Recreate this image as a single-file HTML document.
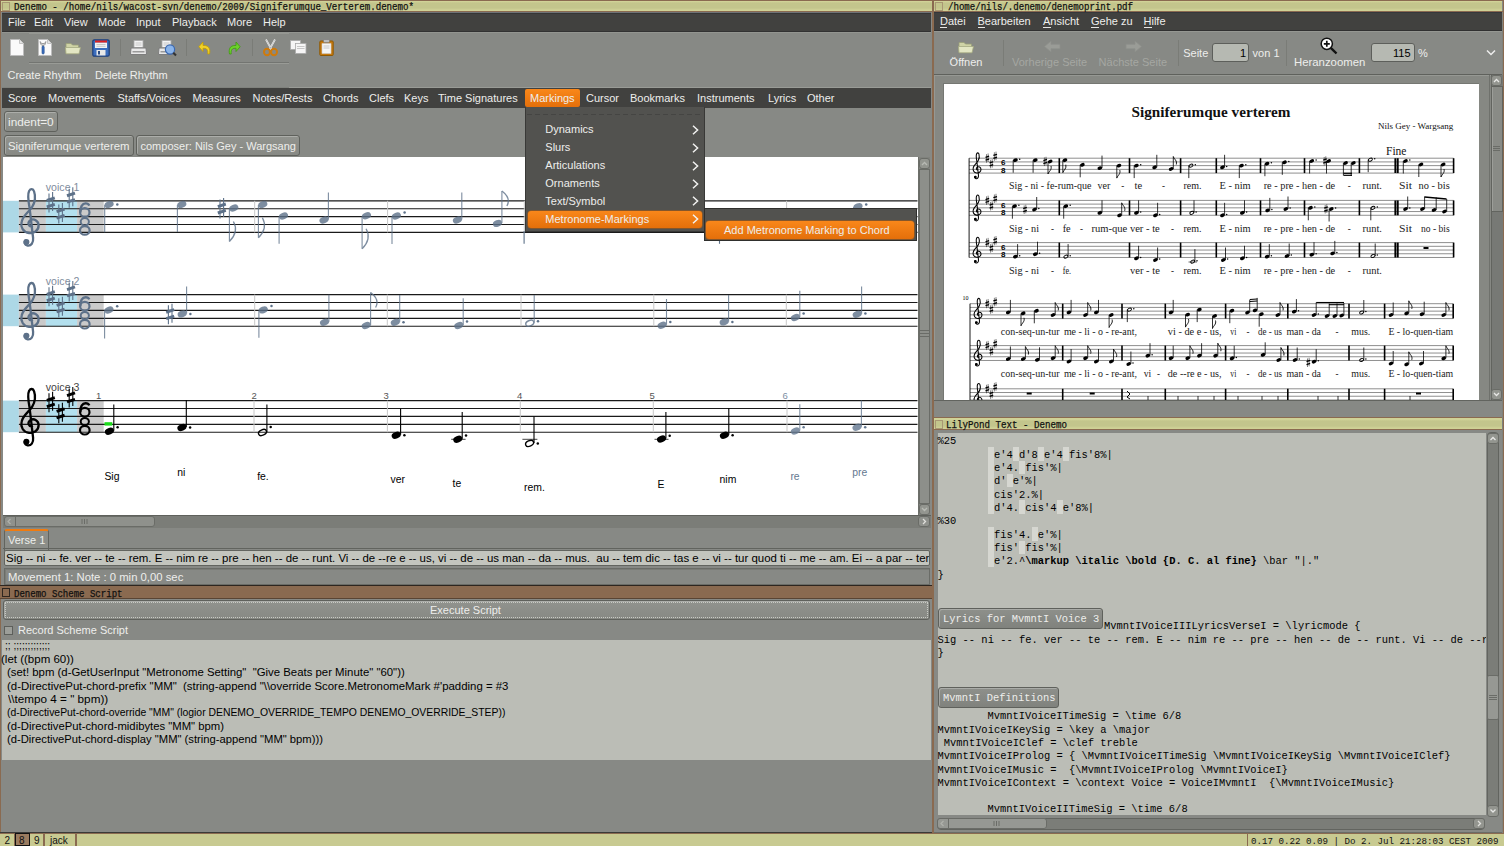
<!DOCTYPE html>
<html><head><meta charset="utf-8"><style>
html,body{margin:0;padding:0;}
body{width:1504px;height:846px;position:relative;overflow:hidden;background:#878985;font-family:"Liberation Sans",sans-serif;}
.a{position:absolute;}
svg.a{overflow:visible;}
.t{position:absolute;white-space:pre;font-family:"Liberation Sans",sans-serif;font-size:11px;line-height:13px;color:#eeeeec;}
.tb{position:absolute;background:#c6c791;}
.menu{position:absolute;background:#3c3c3c;}
.btn{position:absolute;box-sizing:border-box;border:1px solid #5f615c;border-radius:3px;background:linear-gradient(#91938e,#878984);box-shadow:inset 1px 1px 0 rgba(255,255,255,0.25);}
</style></head><body>
<div class="a" style="left:0px;top:0px;width:933px;height:846px;background:#878985;"></div>
<div class="a" style="left:0px;top:0px;width:933px;height:12px;background:linear-gradient(#d0d297 0 1.5px,#c3c58c 3px 8px,#cfd196 10px);"></div>
<div class="a" style="left:0px;top:0px;width:933px;height:1px;background:#8a6a50;"></div>
<div class="a" style="left:0px;top:11px;width:933px;height:1px;background:#8a6a50;"></div>
<div class="a" style="left:2px;top:2px;width:6px;height:7px;border:1px solid #a89873;"></div>
<div class="t" style="left:14px;top:0.53px;font-size:10.4px;font-family:'Liberation Mono',monospace;color:#111;-webkit-text-stroke:0.25px #111;transform:scaleX(0.8788);transform-origin:0 0;">Denemo - /home/nils/wacost-svn/denemo/2009/Signiferumque_Verterem.denemo*</div>
<div class="a" style="left:0px;top:0px;width:1px;height:846px;background:#8a6a50;"></div>
<div class="a" style="left:2px;top:12px;width:929px;height:1px;background:#6f7378;"></div>
<div class="a" style="left:2px;top:13px;width:929px;height:1px;background:#363636;"></div>
<div class="a" style="left:2px;top:14px;width:929px;height:17px;background:#41413f;"></div>
<div class="a" style="left:2px;top:31px;width:929px;height:1px;background:#323232;"></div>
<div class="a" style="left:2px;top:32px;width:929px;height:1px;background:#939590;"></div>
<div class="t" style="left:8px;top:15.69px;font-size:11px;font-family:'Liberation Sans',sans-serif;">File</div>
<div class="t" style="left:34px;top:15.69px;font-size:11px;font-family:'Liberation Sans',sans-serif;">Edit</div>
<div class="t" style="left:64px;top:15.69px;font-size:11px;font-family:'Liberation Sans',sans-serif;">View</div>
<div class="t" style="left:98px;top:15.69px;font-size:11px;font-family:'Liberation Sans',sans-serif;">Mode</div>
<div class="t" style="left:136px;top:15.69px;font-size:11px;font-family:'Liberation Sans',sans-serif;">Input</div>
<div class="t" style="left:172px;top:15.69px;font-size:11px;font-family:'Liberation Sans',sans-serif;">Playback</div>
<div class="t" style="left:227px;top:15.69px;font-size:11px;font-family:'Liberation Sans',sans-serif;">More</div>
<div class="t" style="left:263px;top:15.69px;font-size:11px;font-family:'Liberation Sans',sans-serif;">Help</div>
<div class="a" style="left:29px;top:33px;width:260px;height:1px;background:#959792;"></div>
<div class="a" style="left:29px;top:62px;width:260px;height:1px;background:#737571;"></div>
<div class="a" style="left:29px;top:63px;width:260px;height:1px;background:#999b96;"></div>
<div class="t" style="left:7.5px;top:68.69px;font-size:11px;font-family:'Liberation Sans',sans-serif;">Create Rhythm</div>
<div class="t" style="left:95px;top:68.69px;font-size:11px;font-family:'Liberation Sans',sans-serif;">Delete Rhythm</div>
<div class="a" style="left:2px;top:87px;width:287px;height:1px;background:#7f817c;"></div>
<div class="a" style="left:289px;top:87px;width:642px;height:1px;background:#999b96;"></div>
<div class="a" style="left:2px;top:88px;width:929px;height:20px;background:#41413f;"></div>
<div class="t" style="left:8px;top:92.19px;font-size:11px;font-family:'Liberation Sans',sans-serif;">Score</div>
<div class="t" style="left:48px;top:92.19px;font-size:11px;font-family:'Liberation Sans',sans-serif;">Movements</div>
<div class="t" style="left:117.5px;top:92.19px;font-size:11px;font-family:'Liberation Sans',sans-serif;">Staffs/Voices</div>
<div class="t" style="left:192.5px;top:92.19px;font-size:11px;font-family:'Liberation Sans',sans-serif;">Measures</div>
<div class="t" style="left:252.5px;top:92.19px;font-size:11px;font-family:'Liberation Sans',sans-serif;">Notes/Rests</div>
<div class="t" style="left:323px;top:92.19px;font-size:11px;font-family:'Liberation Sans',sans-serif;">Chords</div>
<div class="t" style="left:369px;top:92.19px;font-size:11px;font-family:'Liberation Sans',sans-serif;">Clefs</div>
<div class="t" style="left:404px;top:92.19px;font-size:11px;font-family:'Liberation Sans',sans-serif;">Keys</div>
<div class="t" style="left:438px;top:92.19px;font-size:11px;font-family:'Liberation Sans',sans-serif;">Time Signatures</div>
<div class="t" style="left:586px;top:92.19px;font-size:11px;font-family:'Liberation Sans',sans-serif;">Cursor</div>
<div class="t" style="left:630px;top:92.19px;font-size:11px;font-family:'Liberation Sans',sans-serif;">Bookmarks</div>
<div class="t" style="left:697px;top:92.19px;font-size:11px;font-family:'Liberation Sans',sans-serif;">Instruments</div>
<div class="t" style="left:768px;top:92.19px;font-size:11px;font-family:'Liberation Sans',sans-serif;">Lyrics</div>
<div class="t" style="left:807px;top:92.19px;font-size:11px;font-family:'Liberation Sans',sans-serif;">Other</div>
<div class="a" style="left:525px;top:89px;width:55px;height:18px;background:linear-gradient(#f9871a,#e46f0a);border-radius:2px;"></div>
<div class="t" style="left:530px;top:92.19px;font-size:11px;font-family:'Liberation Sans',sans-serif;">Markings</div>
<div class="btn" style="left:4px;top:111px;width:54px;height:21px;"></div>
<div class="t" style="left:8px;top:115.69px;font-size:11px;font-family:'Liberation Sans',sans-serif;transform:scaleX(1.0749);transform-origin:0 0;">indent=0</div>
<div class="btn" style="left:4px;top:135px;width:130px;height:21px;"></div>
<div class="t" style="left:8.3px;top:139.69px;font-size:11px;font-family:'Liberation Sans',sans-serif;transform:scaleX(1.0350);transform-origin:0 0;">Signiferumque verterem</div>
<div class="btn" style="left:136px;top:135px;width:164px;height:21px;"></div>
<div class="t" style="left:140.5px;top:139.69px;font-size:11px;font-family:'Liberation Sans',sans-serif;">composer: Nils Gey - Wargsang</div>
<div class="a" style="left:3px;top:157px;width:915px;height:358px;background:#ffffff;"></div>
<div class="a" style="left:918px;top:157px;width:12px;height:358px;background:#80827d;border-left:1px solid #6d6f6a;box-sizing:border-box;"></div>
<div class="a" style="left:919px;top:158px;width:11px;height:11px;background:#93958f;border:1px solid #6a6c67;border-radius:3px;box-sizing:border-box;"></div>
<svg class="a" style="left:919px;top:158px" width="11" height="11"><path d="M3 7 L5.5 4.5 L8 7" fill="none" stroke="#b8bab4" stroke-width="1.3"/></svg>
<div class="a" style="left:919px;top:169px;width:11px;height:335px;background:#8d8f8a;border:1px solid #6a6c67;box-sizing:border-box;"></div>
<div class="a" style="left:919px;top:504px;width:11px;height:11px;background:#93958f;border:1px solid #6a6c67;border-radius:3px;box-sizing:border-box;"></div>
<svg class="a" style="left:919px;top:504px" width="11" height="11"><path d="M3 4 L5.5 6.5 L8 4" fill="none" stroke="#b8bab4" stroke-width="1.3"/></svg>
<div class="a" style="left:919px;top:330px;width:11px;height:1px;background:#6a6c67;"></div>
<div class="a" style="left:919px;top:333px;width:11px;height:1px;background:#6a6c67;"></div>
<div class="a" style="left:919px;top:336px;width:11px;height:1px;background:#6a6c67;"></div>
<div class="a" style="left:3px;top:515px;width:928px;height:13px;background:#7b7d78;border-top:1px solid #5f615c;box-sizing:border-box;"></div>
<div class="a" style="left:4px;top:516px;width:151px;height:11px;background:#8f918c;border:1px solid #6a6c67;border-radius:3px;box-sizing:border-box;"></div>
<div class="a" style="left:15px;top:516px;width:1px;height:11px;background:#6a6c67;"></div>
<svg class="a" style="left:4px;top:516px" width="11" height="11"><path d="M6.5 3 L4 5.5 L6.5 8" fill="none" stroke="#b0b2ac" stroke-width="1.2"/></svg>
<svg class="a" style="left:80px;top:516px" width="10" height="11"><path d="M2 3V8M4.5 3V8M7 3V8" stroke="#6a6c67" stroke-width="1"/></svg>
<div class="a" style="left:918px;top:516px;width:12px;height:11px;background:#8f918c;border:1px solid #6a6c67;border-radius:3px;box-sizing:border-box;"></div>
<svg class="a" style="left:918px;top:516px" width="12" height="11"><path d="M5 3 L7.5 5.5 L5 8" fill="none" stroke="#e0e0dc" stroke-width="1.3"/></svg>
<div class="a" style="left:4px;top:529px;width:45px;height:22px;background:#8c8e89;border:1px solid #62645f;border-bottom:none;border-top:2px solid #f07b0f;border-radius:3px 3px 0 0;box-sizing:border-box;"></div>
<div class="t" style="left:8px;top:533.69px;font-size:11px;font-family:'Liberation Sans',sans-serif;">Verse 1</div>
<div class="a" style="left:3px;top:548px;width:928px;height:1px;background:#62645f;"></div>
<div class="a" style="left:4px;top:550px;width:926px;height:16px;background:#c3c5be;border:1px solid #62645f;border-radius:2px;box-sizing:border-box;"></div>
<div class="a" style="left:4px;top:550px;width:925px;height:16px;overflow:hidden;">
<div class="t" style="left:1.5px;top:1.69px;font-size:11px;font-family:'Liberation Sans',sans-serif;color:#000;transform:scaleX(1.0400);transform-origin:0 0;">Sig -- ni -- fe. ver -- te -- rem. E -- nim re -- pre -- hen -- de -- runt. Vi -- de --re e -- us, vi -- de -- us man -- da -- mus.  au -- tem dic -- tas e -- vi -- tur quod ti -- me -- am. Ei -- a par -- ter</div>
</div>
<div class="a" style="left:4px;top:568px;width:926px;height:17px;background:transparent;border:1px solid #6a6c67;box-shadow:inset 1px 1px 0 #7a7c77;box-sizing:border-box;"></div>
<div class="t" style="left:7.5px;top:570.89px;font-size:11px;font-family:'Liberation Sans',sans-serif;transform:scaleX(1.0276);transform-origin:0 0;">Movement 1: Note : 0 min 0,00 sec</div>
<div class="a" style="left:0px;top:585px;width:933px;height:1px;background:#2e2620;"></div>
<div class="a" style="left:0px;top:586px;width:933px;height:13px;background:#8a6a50;"></div>
<div class="a" style="left:0px;top:598px;width:933px;height:1px;background:#5a4534;"></div>
<div class="a" style="left:2px;top:588px;width:6px;height:7px;border:1px solid #2e2620;"></div>
<div class="t" style="left:14px;top:587.53px;font-size:10.4px;font-family:'Liberation Mono',monospace;color:#111;-webkit-text-stroke:0.25px #111;transform:scaleX(0.8700);transform-origin:0 0;">Denemo Scheme Script</div>
<div class="btn" style="left:3px;top:600px;width:927px;height:20px;"></div>
<div class="a" style="left:5px;top:602px;width:923px;height:16px;background:transparent;border:1px dotted #c8cac4;box-sizing:border-box;"></div>
<div class="t" style="left:430px;top:603.69px;font-size:11px;font-family:'Liberation Sans',sans-serif;">Execute Script</div>
<div class="a" style="left:4px;top:626px;width:9px;height:9px;background:#9c9e99;border:1px solid #5d5f5b;box-sizing:border-box;"></div>
<div class="t" style="left:18px;top:623.69px;font-size:11px;font-family:'Liberation Sans',sans-serif;">Record Scheme Script</div>
<div class="a" style="left:2px;top:640px;width:929px;height:120px;background:#bbbdb6;"></div>
<div class="t" style="left:4.8px;top:639.49px;font-size:11px;font-family:'Liberation Sans',sans-serif;color:#000;transform:scaleX(0.9242);transform-origin:0 0;">;; ;;;;;;;;;;;;;</div>
<div class="t" style="left:1.4px;top:652.84px;font-size:11px;font-family:'Liberation Sans',sans-serif;color:#000;transform:scaleX(1.0461);transform-origin:0 0;">(let ((bpm 60))</div>
<div class="t" style="left:6.9px;top:666.19px;font-size:11px;font-family:'Liberation Sans',sans-serif;color:#000;transform:scaleX(1.0337);transform-origin:0 0;">(set! bpm (d-GetUserInput "Metronome Setting"  "Give Beats per Minute" "60"))</div>
<div class="t" style="left:6.9px;top:679.54px;font-size:11px;font-family:'Liberation Sans',sans-serif;color:#000;transform:scaleX(1.0367);transform-origin:0 0;">(d-DirectivePut-chord-prefix "MM"  (string-append "\\override Score.MetronomeMark #'padding = #3</div>
<div class="t" style="left:7.8px;top:692.89px;font-size:11px;font-family:'Liberation Sans',sans-serif;color:#000;transform:scaleX(1.0649);transform-origin:0 0;">\\tempo 4 = " bpm))</div>
<div class="t" style="left:6.9px;top:706.24px;font-size:11px;font-family:'Liberation Sans',sans-serif;color:#000;transform:scaleX(0.9451);transform-origin:0 0;">(d-DirectivePut-chord-override "MM" (logior DENEMO_OVERRIDE_TEMPO DENEMO_OVERRIDE_STEP))</div>
<div class="t" style="left:6.9px;top:719.59px;font-size:11px;font-family:'Liberation Sans',sans-serif;color:#000;transform:scaleX(1.0267);transform-origin:0 0;">(d-DirectivePut-chord-midibytes "MM" bpm)</div>
<div class="t" style="left:6.9px;top:732.94px;font-size:11px;font-family:'Liberation Sans',sans-serif;color:#000;transform:scaleX(1.0202);transform-origin:0 0;">(d-DirectivePut-chord-display "MM" (string-append "MM" bpm)))</div>
<div class="a" style="left:0px;top:832px;width:932px;height:1px;background:#3a3a38;"></div>
<div class="a" style="left:934px;top:832px;width:568px;height:1px;background:#6a6c67;"></div>
<div class="a" style="left:0px;top:833px;width:1504px;height:13px;background:#c8ca91;"></div>
<div class="a" style="left:0px;top:833px;width:1504px;height:1px;background:#8a6a50;"></div>
<div class="a" style="left:14px;top:834px;width:1px;height:12px;background:#8a6a50;"></div>
<div class="a" style="left:15px;top:833px;width:15px;height:13px;background:#9a7b60;border:1px solid #111;box-sizing:border-box;"></div>
<div class="a" style="left:43px;top:834px;width:2px;height:12px;background:#8a6a50;"></div>
<div class="a" style="left:75px;top:834px;width:2px;height:12px;background:#8a6a50;"></div>
<div class="t" style="left:4.5px;top:833.53px;font-size:10px;font-family:'Liberation Sans',sans-serif;color:#111;">2</div>
<div class="t" style="left:19px;top:833.53px;font-size:10px;font-family:'Liberation Sans',sans-serif;color:#111;">8</div>
<div class="t" style="left:34px;top:833.53px;font-size:10px;font-family:'Liberation Sans',sans-serif;color:#111;">9</div>
<div class="t" style="left:50px;top:833.53px;font-size:10px;font-family:'Liberation Sans',sans-serif;color:#111;">jack</div>
<svg class="a" style="left:0;top:0" width="1504" height="846"><rect x="3" y="200.80" width="15.90" height="31.60" fill="#add8e6"/><rect x="18.9" y="200.80" width="27" height="31.60" fill="#cacaca"/><rect x="45.9" y="200.80" width="31.2" height="31.60" fill="#b3e0ee"/><rect x="77.1" y="200.80" width="26.6" height="31.60" fill="#cacaca"/><line x1="18.9" y1="200.80" x2="917.5" y2="200.80" stroke="#1a1a1a" stroke-width="1.15"/><line x1="18.9" y1="208.70" x2="917.5" y2="208.70" stroke="#1a1a1a" stroke-width="1.15"/><line x1="18.9" y1="216.60" x2="917.5" y2="216.60" stroke="#1a1a1a" stroke-width="1.15"/><line x1="18.9" y1="224.50" x2="917.5" y2="224.50" stroke="#1a1a1a" stroke-width="1.15"/><line x1="18.9" y1="232.40" x2="917.5" y2="232.40" stroke="#1a1a1a" stroke-width="1.15"/><text x="45.8" y="190.80" font-family="Liberation Sans" font-size="10.6" fill="#7f8d9e">voice 1</text><g transform="translate(19.60,188.00) scale(1.0)"><path d="M12.5 38.5 C9 39 7.5 35 10.5 32.5 C14 30 19 32.5 19 37.5 C19 43 14 45.5 9.5 45 C3.5 44.5 0.8 39 2 34 C3.5 27 9.5 24 12.5 19 C15.5 14 16 8 14.5 3.5 C13.5 0.5 11 0.5 9.5 3 C8 6 8.5 12 10 20 L13.5 50 C14 55 11.5 58 8 57.5 C5 57 4 54 6 52.5" fill="none" stroke="#5d7189" stroke-width="2.3" stroke-linecap="round"/><circle cx="6.8" cy="54" r="3" fill="#5d7189"/></g><line x1="49.00" y1="193.40" x2="49.00" y2="212.40" stroke="#5d7189" stroke-width="1.10"/><line x1="52.60" y1="191.90" x2="52.60" y2="210.90" stroke="#5d7189" stroke-width="1.10"/><line x1="46.80" y1="200.50" x2="54.80" y2="197.90" stroke="#5d7189" stroke-width="2.90"/><line x1="46.80" y1="206.90" x2="54.80" y2="204.30" stroke="#5d7189" stroke-width="2.90"/><line x1="58.80" y1="204.55" x2="58.80" y2="223.55" stroke="#5d7189" stroke-width="1.10"/><line x1="62.40" y1="203.05" x2="62.40" y2="222.05" stroke="#5d7189" stroke-width="1.10"/><line x1="56.60" y1="211.65" x2="64.60" y2="209.05" stroke="#5d7189" stroke-width="2.90"/><line x1="56.60" y1="218.05" x2="64.60" y2="215.45" stroke="#5d7189" stroke-width="2.90"/><line x1="69.20" y1="188.66" x2="69.20" y2="207.66" stroke="#5d7189" stroke-width="1.10"/><line x1="72.80" y1="187.16" x2="72.80" y2="206.16" stroke="#5d7189" stroke-width="1.10"/><line x1="67.00" y1="195.75" x2="75.00" y2="193.16" stroke="#5d7189" stroke-width="2.90"/><line x1="67.00" y1="202.16" x2="75.00" y2="199.56" stroke="#5d7189" stroke-width="2.90"/><ellipse cx="84.8" cy="212.40" rx="4.7" ry="4.3" fill="none" stroke="#5d7189" stroke-width="2.2"/><path d="M80.3 212.60 C80 206.80 82.5 203.40 85.5 203.40 C87.5 203.40 88.8 204.40 89.3 205.60" fill="none" stroke="#5d7189" stroke-width="2.4"/><ellipse cx="84.8" cy="221.80" rx="4.1" ry="3.7" fill="none" stroke="#5d7189" stroke-width="2.0"/><ellipse cx="84.8" cy="230.40" rx="4.8" ry="4.3" fill="none" stroke="#5d7189" stroke-width="2.2"/><rect x="3" y="294.60" width="15.90" height="31.60" fill="#add8e6"/><rect x="18.9" y="294.60" width="27" height="31.60" fill="#cacaca"/><rect x="45.9" y="294.60" width="31.2" height="31.60" fill="#b3e0ee"/><rect x="77.1" y="294.60" width="26.6" height="31.60" fill="#cacaca"/><line x1="18.9" y1="294.60" x2="917.5" y2="294.60" stroke="#1a1a1a" stroke-width="1.15"/><line x1="18.9" y1="302.50" x2="917.5" y2="302.50" stroke="#1a1a1a" stroke-width="1.15"/><line x1="18.9" y1="310.40" x2="917.5" y2="310.40" stroke="#1a1a1a" stroke-width="1.15"/><line x1="18.9" y1="318.30" x2="917.5" y2="318.30" stroke="#1a1a1a" stroke-width="1.15"/><line x1="18.9" y1="326.20" x2="917.5" y2="326.20" stroke="#1a1a1a" stroke-width="1.15"/><text x="45.8" y="284.60" font-family="Liberation Sans" font-size="10.6" fill="#7f8d9e">voice 2</text><g transform="translate(19.60,281.80) scale(1.0)"><path d="M12.5 38.5 C9 39 7.5 35 10.5 32.5 C14 30 19 32.5 19 37.5 C19 43 14 45.5 9.5 45 C3.5 44.5 0.8 39 2 34 C3.5 27 9.5 24 12.5 19 C15.5 14 16 8 14.5 3.5 C13.5 0.5 11 0.5 9.5 3 C8 6 8.5 12 10 20 L13.5 50 C14 55 11.5 58 8 57.5 C5 57 4 54 6 52.5" fill="none" stroke="#5d7189" stroke-width="2.3" stroke-linecap="round"/><circle cx="6.8" cy="54" r="3" fill="#5d7189"/></g><line x1="49.00" y1="287.20" x2="49.00" y2="306.20" stroke="#5d7189" stroke-width="1.10"/><line x1="52.60" y1="285.70" x2="52.60" y2="304.70" stroke="#5d7189" stroke-width="1.10"/><line x1="46.80" y1="294.30" x2="54.80" y2="291.70" stroke="#5d7189" stroke-width="2.90"/><line x1="46.80" y1="300.70" x2="54.80" y2="298.10" stroke="#5d7189" stroke-width="2.90"/><line x1="58.80" y1="298.35" x2="58.80" y2="317.35" stroke="#5d7189" stroke-width="1.10"/><line x1="62.40" y1="296.85" x2="62.40" y2="315.85" stroke="#5d7189" stroke-width="1.10"/><line x1="56.60" y1="305.45" x2="64.60" y2="302.85" stroke="#5d7189" stroke-width="2.90"/><line x1="56.60" y1="311.85" x2="64.60" y2="309.25" stroke="#5d7189" stroke-width="2.90"/><line x1="69.20" y1="282.45" x2="69.20" y2="301.45" stroke="#5d7189" stroke-width="1.10"/><line x1="72.80" y1="280.95" x2="72.80" y2="299.95" stroke="#5d7189" stroke-width="1.10"/><line x1="67.00" y1="289.56" x2="75.00" y2="286.95" stroke="#5d7189" stroke-width="2.90"/><line x1="67.00" y1="295.95" x2="75.00" y2="293.35" stroke="#5d7189" stroke-width="2.90"/><ellipse cx="84.8" cy="306.20" rx="4.7" ry="4.3" fill="none" stroke="#5d7189" stroke-width="2.2"/><path d="M80.3 306.40 C80 300.60 82.5 297.20 85.5 297.20 C87.5 297.20 88.8 298.20 89.3 299.40" fill="none" stroke="#5d7189" stroke-width="2.4"/><ellipse cx="84.8" cy="315.60" rx="4.1" ry="3.7" fill="none" stroke="#5d7189" stroke-width="2.0"/><ellipse cx="84.8" cy="324.20" rx="4.8" ry="4.3" fill="none" stroke="#5d7189" stroke-width="2.2"/><rect x="3" y="400.60" width="15.90" height="31.60" fill="#add8e6"/><rect x="18.9" y="400.60" width="27" height="31.60" fill="#cacaca"/><rect x="45.9" y="400.60" width="31.2" height="31.60" fill="#b3e0ee"/><rect x="77.1" y="400.60" width="26.6" height="31.60" fill="#cacaca"/><line x1="18.9" y1="400.60" x2="917.5" y2="400.60" stroke="#1a1a1a" stroke-width="1.15"/><line x1="18.9" y1="408.50" x2="917.5" y2="408.50" stroke="#1a1a1a" stroke-width="1.15"/><line x1="18.9" y1="416.40" x2="917.5" y2="416.40" stroke="#1a1a1a" stroke-width="1.15"/><line x1="18.9" y1="424.30" x2="917.5" y2="424.30" stroke="#1a1a1a" stroke-width="1.15"/><line x1="18.9" y1="432.20" x2="917.5" y2="432.20" stroke="#1a1a1a" stroke-width="1.15"/><text x="45.8" y="390.60" font-family="Liberation Sans" font-size="10.6" fill="#444">voice 3</text><g transform="translate(19.60,387.80) scale(1.0)"><path d="M12.5 38.5 C9 39 7.5 35 10.5 32.5 C14 30 19 32.5 19 37.5 C19 43 14 45.5 9.5 45 C3.5 44.5 0.8 39 2 34 C3.5 27 9.5 24 12.5 19 C15.5 14 16 8 14.5 3.5 C13.5 0.5 11 0.5 9.5 3 C8 6 8.5 12 10 20 L13.5 50 C14 55 11.5 58 8 57.5 C5 57 4 54 6 52.5" fill="none" stroke="#000" stroke-width="2.3" stroke-linecap="round"/><circle cx="6.8" cy="54" r="3" fill="#000"/></g><line x1="49.00" y1="393.20" x2="49.00" y2="412.20" stroke="#000" stroke-width="1.10"/><line x1="52.60" y1="391.70" x2="52.60" y2="410.70" stroke="#000" stroke-width="1.10"/><line x1="46.80" y1="400.30" x2="54.80" y2="397.70" stroke="#000" stroke-width="2.90"/><line x1="46.80" y1="406.70" x2="54.80" y2="404.10" stroke="#000" stroke-width="2.90"/><line x1="58.80" y1="404.35" x2="58.80" y2="423.35" stroke="#000" stroke-width="1.10"/><line x1="62.40" y1="402.85" x2="62.40" y2="421.85" stroke="#000" stroke-width="1.10"/><line x1="56.60" y1="411.45" x2="64.60" y2="408.85" stroke="#000" stroke-width="2.90"/><line x1="56.60" y1="417.85" x2="64.60" y2="415.25" stroke="#000" stroke-width="2.90"/><line x1="69.20" y1="388.45" x2="69.20" y2="407.45" stroke="#000" stroke-width="1.10"/><line x1="72.80" y1="386.95" x2="72.80" y2="405.95" stroke="#000" stroke-width="1.10"/><line x1="67.00" y1="395.56" x2="75.00" y2="392.95" stroke="#000" stroke-width="2.90"/><line x1="67.00" y1="401.95" x2="75.00" y2="399.35" stroke="#000" stroke-width="2.90"/><ellipse cx="84.8" cy="412.20" rx="4.7" ry="4.3" fill="none" stroke="#000" stroke-width="2.2"/><path d="M80.3 412.40 C80 406.60 82.5 403.20 85.5 403.20 C87.5 403.20 88.8 404.20 89.3 405.40" fill="none" stroke="#000" stroke-width="2.4"/><ellipse cx="84.8" cy="421.60" rx="4.1" ry="3.7" fill="none" stroke="#000" stroke-width="2.0"/><ellipse cx="84.8" cy="430.20" rx="4.8" ry="4.3" fill="none" stroke="#000" stroke-width="2.2"/><line x1="254.70" y1="200.80" x2="254.70" y2="232.40" stroke="#c8c8c8" stroke-width="1"/><line x1="387.60" y1="200.80" x2="387.60" y2="232.40" stroke="#c8c8c8" stroke-width="1"/><line x1="524.30" y1="200.80" x2="524.30" y2="232.40" stroke="#c8c8c8" stroke-width="1"/><line x1="786.60" y1="200.80" x2="786.60" y2="232.40" stroke="#c8c8c8" stroke-width="1"/><g opacity="0.8"><ellipse cx="109.10" cy="204.50" rx="4.70" ry="3.30" transform="rotate(-22 109.10 204.50)" fill="#5d7189"/><line x1="104.70" y1="205.00" x2="104.70" y2="232.30" stroke="#5d7189" stroke-width="1.1"/></g><circle cx="117.30" cy="204.50" r="1.25" fill="#5d7189"/><g opacity="0.8"><ellipse cx="181.80" cy="204.50" rx="4.70" ry="3.30" transform="rotate(-22 181.80 204.50)" fill="#5d7189"/><line x1="177.40" y1="205.00" x2="177.40" y2="232.00" stroke="#5d7189" stroke-width="1.1"/></g><line x1="220.00" y1="199.50" x2="220.00" y2="218.50" stroke="#5d7189" stroke-width="1.10"/><line x1="223.60" y1="198.00" x2="223.60" y2="217.00" stroke="#5d7189" stroke-width="1.10"/><line x1="217.80" y1="206.60" x2="225.80" y2="204.00" stroke="#5d7189" stroke-width="2.90"/><line x1="217.80" y1="213.00" x2="225.80" y2="210.40" stroke="#5d7189" stroke-width="2.90"/><g opacity="0.8"><ellipse cx="233.80" cy="208.00" rx="4.70" ry="3.30" transform="rotate(-22 233.80 208.00)" fill="#5d7189"/><line x1="229.40" y1="208.50" x2="229.40" y2="241.50" stroke="#5d7189" stroke-width="1.1"/><path d="M229.40 241.50 C233.40 237.50 238.40 230.50 233.40 221.50" fill="none" stroke="#5d7189" stroke-width="1.3"/></g><g opacity="0.8"><ellipse cx="262.80" cy="204.50" rx="4.70" ry="3.30" transform="rotate(-22 262.80 204.50)" fill="#5d7189"/><line x1="258.40" y1="205.00" x2="258.40" y2="237.70" stroke="#5d7189" stroke-width="1.1"/><path d="M258.40 237.70 C262.40 233.70 267.40 226.70 262.40 217.70" fill="none" stroke="#5d7189" stroke-width="1.3"/></g><g opacity="0.8"><ellipse cx="283.50" cy="216.00" rx="4.70" ry="3.30" transform="rotate(-22 283.50 216.00)" fill="#5d7189"/><line x1="279.10" y1="216.50" x2="279.10" y2="243.80" stroke="#5d7189" stroke-width="1.1"/></g><g opacity="0.8"><ellipse cx="324.00" cy="220.00" rx="4.70" ry="3.30" transform="rotate(-22 324.00 220.00)" fill="#5d7189"/><line x1="328.40" y1="219.50" x2="328.40" y2="192.40" stroke="#5d7189" stroke-width="1.1"/></g><g opacity="0.8"><ellipse cx="366.50" cy="215.70" rx="4.70" ry="3.30" transform="rotate(-22 366.50 215.70)" fill="#5d7189"/><line x1="362.10" y1="216.20" x2="362.10" y2="248.80" stroke="#5d7189" stroke-width="1.1"/><path d="M362.10 248.80 C366.10 244.80 371.10 237.80 366.10 228.80" fill="none" stroke="#5d7189" stroke-width="1.3"/></g><g opacity="0.8"><ellipse cx="396.40" cy="216.00" rx="4.70" ry="3.30" transform="rotate(-22 396.40 216.00)" fill="#5d7189"/><line x1="392.00" y1="216.50" x2="392.00" y2="243.90" stroke="#5d7189" stroke-width="1.1"/></g><circle cx="404.60" cy="212.50" r="1.25" fill="#5d7189"/><g opacity="0.8"><ellipse cx="457.40" cy="220.00" rx="4.70" ry="3.30" transform="rotate(-22 457.40 220.00)" fill="#5d7189"/><line x1="461.80" y1="219.50" x2="461.80" y2="192.40" stroke="#5d7189" stroke-width="1.1"/></g><g opacity="0.8"><ellipse cx="497.50" cy="223.40" rx="4.70" ry="3.30" transform="rotate(-22 497.50 223.40)" fill="#5d7189"/><line x1="501.90" y1="222.90" x2="501.90" y2="191.00" stroke="#5d7189" stroke-width="1.1"/><path d="M501.90 191.00 C505.90 194.00 510.90 199.00 506.90 206.00" fill="none" stroke="#5d7189" stroke-width="1.3"/></g><line x1="524.1" y1="231" x2="524.1" y2="243.8" stroke="#5d7189" stroke-width="1.1"/><line x1="719.5" y1="236" x2="719.5" y2="243.8" stroke="#5d7189" stroke-width="1.1"/><g opacity="0.8"><ellipse cx="858.00" cy="206.60" rx="4.70" ry="3.30" transform="rotate(-22 858.00 206.60)" fill="#5d7189"/><line x1="853.60" y1="207.10" x2="853.60" y2="232.00" stroke="#5d7189" stroke-width="1.1"/></g><circle cx="866.20" cy="204.40" r="1.25" fill="#5d7189"/><line x1="254.70" y1="294.60" x2="254.70" y2="326.20" stroke="#c8c8c8" stroke-width="1"/><line x1="387.30" y1="294.60" x2="387.30" y2="326.20" stroke="#c8c8c8" stroke-width="1"/><line x1="521.00" y1="294.60" x2="521.00" y2="326.20" stroke="#c8c8c8" stroke-width="1"/><line x1="653.80" y1="294.60" x2="653.80" y2="326.20" stroke="#c8c8c8" stroke-width="1"/><line x1="786.30" y1="294.60" x2="786.30" y2="326.20" stroke="#c8c8c8" stroke-width="1"/><g opacity="0.8"><ellipse cx="109.00" cy="310.00" rx="4.70" ry="3.30" transform="rotate(-22 109.00 310.00)" fill="#5d7189"/><line x1="104.60" y1="310.50" x2="104.60" y2="338.50" stroke="#5d7189" stroke-width="1.1"/></g><circle cx="117.20" cy="306.20" r="1.25" fill="#5d7189"/><line x1="168.40" y1="305.20" x2="168.40" y2="324.20" stroke="#5d7189" stroke-width="1.10"/><line x1="172.00" y1="303.70" x2="172.00" y2="322.70" stroke="#5d7189" stroke-width="1.10"/><line x1="166.20" y1="312.30" x2="174.20" y2="309.70" stroke="#5d7189" stroke-width="2.90"/><line x1="166.20" y1="318.70" x2="174.20" y2="316.10" stroke="#5d7189" stroke-width="2.90"/><g opacity="0.8"><ellipse cx="182.20" cy="313.90" rx="4.70" ry="3.30" transform="rotate(-22 182.20 313.90)" fill="#5d7189"/><line x1="186.60" y1="313.40" x2="186.60" y2="286.60" stroke="#5d7189" stroke-width="1.1"/></g><circle cx="190.40" cy="313.90" r="1.25" fill="#5d7189"/><g opacity="0.8"><ellipse cx="263.30" cy="309.90" rx="4.70" ry="3.30" transform="rotate(-22 263.30 309.90)" fill="#5d7189"/><line x1="258.90" y1="310.40" x2="258.90" y2="337.80" stroke="#5d7189" stroke-width="1.1"/></g><circle cx="271.50" cy="306.00" r="1.25" fill="#5d7189"/><g opacity="0.8"><ellipse cx="324.50" cy="322.20" rx="4.70" ry="3.30" transform="rotate(-22 324.50 322.20)" fill="#5d7189"/><line x1="328.90" y1="321.70" x2="328.90" y2="294.80" stroke="#5d7189" stroke-width="1.1"/></g><g opacity="0.8"><ellipse cx="366.20" cy="325.50" rx="4.70" ry="3.30" transform="rotate(-22 366.20 325.50)" fill="#5d7189"/><line x1="370.60" y1="325.00" x2="370.60" y2="292.50" stroke="#5d7189" stroke-width="1.1"/><path d="M370.60 292.50 C374.60 295.50 379.60 300.50 375.60 307.50" fill="none" stroke="#5d7189" stroke-width="1.3"/></g><g opacity="0.8"><ellipse cx="395.30" cy="322.20" rx="4.70" ry="3.30" transform="rotate(-22 395.30 322.20)" fill="#5d7189"/><line x1="399.70" y1="321.70" x2="399.70" y2="295.00" stroke="#5d7189" stroke-width="1.1"/></g><circle cx="403.50" cy="322.20" r="1.25" fill="#5d7189"/><g opacity="0.8"><ellipse cx="458.80" cy="325.50" rx="4.70" ry="3.30" transform="rotate(-22 458.80 325.50)" fill="#5d7189"/><line x1="463.20" y1="325.00" x2="463.20" y2="298.30" stroke="#5d7189" stroke-width="1.1"/></g><circle cx="467.00" cy="321.50" r="1.25" fill="#5d7189"/><g opacity="0.8"><ellipse cx="529.80" cy="323.20" rx="4.20" ry="2.70" transform="rotate(-25 529.80 323.20)" fill="none" stroke="#5d7189" stroke-width="1.4"/><line x1="534.20" y1="322.70" x2="534.20" y2="295.00" stroke="#5d7189" stroke-width="1.1"/></g><circle cx="538.00" cy="321.20" r="1.25" fill="#5d7189"/><g opacity="0.8"><ellipse cx="662.10" cy="325.20" rx="4.70" ry="3.30" transform="rotate(-22 662.10 325.20)" fill="#5d7189"/><line x1="666.50" y1="324.70" x2="666.50" y2="299.00" stroke="#5d7189" stroke-width="1.1"/></g><circle cx="670.30" cy="321.90" r="1.25" fill="#5d7189"/><g opacity="0.8"><ellipse cx="724.20" cy="321.90" rx="4.70" ry="3.30" transform="rotate(-22 724.20 321.90)" fill="#5d7189"/><line x1="728.60" y1="321.40" x2="728.60" y2="294.90" stroke="#5d7189" stroke-width="1.1"/></g><circle cx="732.40" cy="321.90" r="1.25" fill="#5d7189"/><g opacity="0.8"><ellipse cx="795.40" cy="317.50" rx="4.70" ry="3.30" transform="rotate(-22 795.40 317.50)" fill="#5d7189"/><line x1="799.80" y1="317.00" x2="799.80" y2="290.70" stroke="#5d7189" stroke-width="1.1"/></g><circle cx="803.60" cy="313.60" r="1.25" fill="#5d7189"/><g opacity="0.8"><ellipse cx="857.20" cy="314.20" rx="4.70" ry="3.30" transform="rotate(-22 857.20 314.20)" fill="#5d7189"/><line x1="861.60" y1="313.70" x2="861.60" y2="286.60" stroke="#5d7189" stroke-width="1.1"/></g><circle cx="865.40" cy="313.60" r="1.25" fill="#5d7189"/><text x="96" y="399.3" font-family="Liberation Sans" font-size="9.5" fill="#555">1</text><text x="251.6" y="399.3" font-family="Liberation Sans" font-size="9.5" fill="#555">2</text><text x="383.6" y="399.3" font-family="Liberation Sans" font-size="9.5" fill="#555">3</text><text x="517" y="399.3" font-family="Liberation Sans" font-size="9.5" fill="#555">4</text><text x="649.5" y="399.3" font-family="Liberation Sans" font-size="9.5" fill="#555">5</text><text x="782.5" y="399.3" font-family="Liberation Sans" font-size="9.5" fill="#7d8ea3">6</text><line x1="254.00" y1="400.60" x2="254.00" y2="432.20" stroke="#c8c8c8" stroke-width="1"/><line x1="387.40" y1="400.60" x2="387.40" y2="432.20" stroke="#c8c8c8" stroke-width="1"/><line x1="520.30" y1="400.60" x2="520.30" y2="432.20" stroke="#c8c8c8" stroke-width="1"/><line x1="653.30" y1="400.60" x2="653.30" y2="432.20" stroke="#c8c8c8" stroke-width="1"/><line x1="787.00" y1="400.60" x2="787.00" y2="432.20" stroke="#c8c8c8" stroke-width="1"/><rect x="104.5" y="422.2" width="7.8" height="3.4" fill="#1adc1a"/><ellipse cx="109.40" cy="431.30" rx="4.70" ry="3.30" transform="rotate(-22 109.40 431.30)" fill="#000"/><line x1="113.80" y1="430.80" x2="113.80" y2="404.40" stroke="#000" stroke-width="1.1"/><circle cx="117.60" cy="427.30" r="1.25" fill="#000"/><ellipse cx="181.90" cy="427.50" rx="4.70" ry="3.30" transform="rotate(-22 181.90 427.50)" fill="#000"/><line x1="186.30" y1="427.00" x2="186.30" y2="400.00" stroke="#000" stroke-width="1.1"/><circle cx="190.10" cy="427.50" r="1.25" fill="#000"/><ellipse cx="262.50" cy="432.50" rx="4.20" ry="2.70" transform="rotate(-25 262.50 432.50)" fill="none" stroke="#000" stroke-width="1.4"/><line x1="266.90" y1="432.00" x2="266.90" y2="404.40" stroke="#000" stroke-width="1.1"/><circle cx="270.70" cy="427.00" r="1.25" fill="#000"/><ellipse cx="396.20" cy="435.30" rx="4.70" ry="3.30" transform="rotate(-22 396.20 435.30)" fill="#000"/><line x1="400.60" y1="434.80" x2="400.60" y2="408.70" stroke="#000" stroke-width="1.1"/><circle cx="404.40" cy="435.30" r="1.25" fill="#000"/><line x1="451.2" y1="439.3" x2="465.6" y2="439.3" stroke="#444" stroke-width="1"/><ellipse cx="457.80" cy="439.20" rx="4.70" ry="3.30" transform="rotate(-22 457.80 439.20)" fill="#000"/><line x1="462.20" y1="438.70" x2="462.20" y2="412.10" stroke="#000" stroke-width="1.1"/><circle cx="466.00" cy="435.50" r="1.25" fill="#000"/><line x1="522.4" y1="439.3" x2="537.4" y2="439.3" stroke="#444" stroke-width="1"/><ellipse cx="529.60" cy="443.40" rx="4.20" ry="2.70" transform="rotate(-25 529.60 443.40)" fill="none" stroke="#000" stroke-width="1.4"/><line x1="534.00" y1="442.90" x2="534.00" y2="416.50" stroke="#000" stroke-width="1.1"/><circle cx="537.80" cy="443.40" r="1.25" fill="#000"/><line x1="654.5" y1="439.3" x2="668.5" y2="439.3" stroke="#444" stroke-width="1"/><ellipse cx="661.50" cy="439.00" rx="4.70" ry="3.30" transform="rotate(-22 661.50 439.00)" fill="#000"/><line x1="665.90" y1="438.50" x2="665.90" y2="412.00" stroke="#000" stroke-width="1.1"/><circle cx="669.70" cy="435.80" r="1.25" fill="#000"/><ellipse cx="724.40" cy="435.20" rx="4.70" ry="3.30" transform="rotate(-22 724.40 435.20)" fill="#000"/><line x1="728.80" y1="434.70" x2="728.80" y2="408.30" stroke="#000" stroke-width="1.1"/><circle cx="732.60" cy="435.20" r="1.25" fill="#000"/><g opacity="0.8"><ellipse cx="795.40" cy="431.00" rx="4.70" ry="3.30" transform="rotate(-22 795.40 431.00)" fill="#647890"/><line x1="799.80" y1="430.50" x2="799.80" y2="404.20" stroke="#647890" stroke-width="1.1"/></g><circle cx="803.60" cy="427.30" r="1.25" fill="#647890"/><g opacity="0.8"><ellipse cx="857.00" cy="427.30" rx="4.70" ry="3.30" transform="rotate(-22 857.00 427.30)" fill="#647890"/><line x1="861.40" y1="426.80" x2="861.40" y2="400.40" stroke="#647890" stroke-width="1.1"/></g><circle cx="865.20" cy="427.30" r="1.25" fill="#647890"/><text x="104.4" y="480.3" font-family="Liberation Sans" font-size="10.4" fill="#000">Sig</text><text x="177.2" y="475.6" font-family="Liberation Sans" font-size="10.4" fill="#000">ni</text><text x="257.2" y="480.3" font-family="Liberation Sans" font-size="10.4" fill="#000">fe.</text><text x="390.6" y="483.40000000000003" font-family="Liberation Sans" font-size="10.4" fill="#000">ver</text><text x="452.5" y="487.20000000000005" font-family="Liberation Sans" font-size="10.4" fill="#000">te</text><text x="524.1" y="491.0" font-family="Liberation Sans" font-size="10.4" fill="#000">rem.</text><text x="657.4" y="487.6" font-family="Liberation Sans" font-size="10.4" fill="#000">E</text><text x="719.6" y="483.1" font-family="Liberation Sans" font-size="10.4" fill="#000">nim</text><text x="790.4" y="480.0" font-family="Liberation Sans" font-size="10.4" fill="#647890">re</text><text x="852.3" y="475.90000000000003" font-family="Liberation Sans" font-size="10.4" fill="#647890">pre</text></svg>
<svg class="a" style="left:9px;top:39px" width="16" height="18" viewBox="0 0 16 18"><path d="M1.5 0.5 H10.5 L14.5 4.5 V16.5 H1.5 Z" fill="#fafafa" stroke="#bdbdbd" stroke-width="1"/><path d="M10.5 0.5 V4.5 H14.5" fill="#e4e4e4" stroke="#c4c4c4" stroke-width="1"/></svg>
<svg class="a" style="left:37px;top:39px" width="16" height="18" viewBox="0 0 16 18"><path d="M1.5 0.5 H10.5 L14.5 4.5 V16.5 H1.5 Z" fill="#fafafa" stroke="#bdbdbd" stroke-width="1"/><path d="M10.5 0.5 V4.5 H14.5" fill="#e4e4e4" stroke="#c4c4c4" stroke-width="1"/><path d="M3.2 2.5 C3 5 4.5 6.5 6 7 C7.5 6.5 9 5 8.8 2.5 L7.5 4.5 H4.5 Z" fill="#d0d0d0" stroke="#8a8a8a" stroke-width="0.8"/><rect x="5" y="7" width="2.2" height="8" rx="1" fill="#3d6fc0" stroke="#204a87" stroke-width="0.6"/></svg>
<svg class="a" style="left:65px;top:41px" width="17" height="14" viewBox="0 0 17 14"><path d="M1 2.5 H6 L7.5 4 H13.5 V12.5 H1 Z" fill="#cfd3a6" stroke="#9aa07a" stroke-width="0.8"/><path d="M0.5 6.5 H15.5 L14 12.8 H1 Z" fill="#e3e6c3" stroke="#a4a981" stroke-width="0.8"/></svg>
<svg class="a" style="left:92px;top:39px" width="18" height="18" viewBox="0 0 18 18"><rect x="0.8" y="0.8" width="16.4" height="16.4" rx="1.5" fill="#3b6dbd" stroke="#1f3f7a" stroke-width="1.2"/><rect x="3" y="1.5" width="12" height="2.2" fill="#e02020"/><rect x="3" y="3.7" width="12" height="5.3" fill="#f2f2f2"/><line x1="4.5" y1="5.5" x2="13.5" y2="5.5" stroke="#bbb" stroke-width="0.8"/><line x1="4.5" y1="7.3" x2="13.5" y2="7.3" stroke="#bbb" stroke-width="0.8"/><rect x="4.5" y="11" width="9" height="5.5" fill="#e8e8e8"/><rect x="6" y="12" width="2" height="3.5" fill="#2a4a80"/></svg>
<div class="a" style="left:119.5px;top:39px;width:1px;height:17px;background:#7a7c77;"></div>
<svg class="a" style="left:130px;top:40px" width="17" height="17" viewBox="0 0 17 17"><rect x="4" y="0.5" width="9" height="7" fill="#f4f4f4" stroke="#aaa" stroke-width="0.8"/><line x1="5.5" y1="3" x2="11.5" y2="3" stroke="#bbb" stroke-width="0.8"/><line x1="5.5" y1="5" x2="11.5" y2="5" stroke="#bbb" stroke-width="0.8"/><path d="M1 8 H16 L16.5 14.5 H0.5 Z" fill="#e9e9e9" stroke="#7d7d7d" stroke-width="1"/><rect x="2.5" y="11" width="12" height="1.5" fill="#9a9a9a"/></svg>
<svg class="a" style="left:158px;top:40px" width="19" height="17" viewBox="0 0 19 17"><rect x="4" y="0.5" width="9" height="7" fill="#f4f4f4" stroke="#aaa" stroke-width="0.8"/><line x1="5.5" y1="3" x2="11.5" y2="3" stroke="#bbb" stroke-width="0.8"/><line x1="5.5" y1="5" x2="11.5" y2="5" stroke="#bbb" stroke-width="0.8"/><path d="M1 8 H16 L16.5 14.5 H0.5 Z" fill="#e9e9e9" stroke="#7d7d7d" stroke-width="1"/><rect x="2.5" y="11" width="12" height="1.5" fill="#9a9a9a"/><circle cx="12" cy="9.5" r="4.6" fill="#8ab4ea" stroke="#3a68b0" stroke-width="1.2"/><line x1="15.3" y1="12.8" x2="18" y2="15.5" stroke="#333" stroke-width="2"/></svg>
<div class="a" style="left:186px;top:39px;width:1px;height:17px;background:#7a7c77;"></div>
<svg class="a" style="left:198px;top:40px" width="13" height="15" viewBox="0 0 13 15"><path d="M11.5 14 C12.5 9 11 5.5 6 5.5 H5 V2 L0.8 6.8 L5 11.5 V8.3 H6 C9 8.3 10 10 9.8 14 Z" fill="#f2d22a" stroke="#c4a000" stroke-width="0.8"/></svg>
<svg class="a" style="left:228px;top:40px" width="13" height="15" viewBox="0 0 13 15"><path d="M1.5 14 C0.5 9 2 5.5 7 5.5 H8 V2 L12.2 6.8 L8 11.5 V8.3 H7 C4 8.3 3 10 3.2 14 Z" fill="#6cd22a" stroke="#3f9a10" stroke-width="0.8"/></svg>
<div class="a" style="left:251.5px;top:39px;width:1px;height:17px;background:#7a7c77;"></div>
<svg class="a" style="left:263px;top:39px" width="15" height="17" viewBox="0 0 15 17"><path d="M3 0.5 L8.5 10.5 M12 0.5 L6.5 10.5" stroke="#f4f4f4" stroke-width="1.6"/><path d="M3 0.5 L8.5 10.5 M12 0.5 L6.5 10.5" stroke="#9a9a9a" stroke-width="0.5"/><ellipse cx="4" cy="13" rx="3" ry="3.2" fill="none" stroke="#ce7a0c" stroke-width="2"/><ellipse cx="11" cy="13" rx="3" ry="3.2" fill="none" stroke="#ce7a0c" stroke-width="2"/></svg>
<svg class="a" style="left:290px;top:40px" width="17" height="14" viewBox="0 0 17 14"><rect x="0.5" y="0.5" width="10" height="9" fill="#f6f6f6" stroke="#aaa" stroke-width="0.8"/><rect x="5.5" y="3.5" width="10.5" height="10" fill="#f6f6f6" stroke="#aaa" stroke-width="0.8"/><line x1="7" y1="6.5" x2="14.5" y2="6.5" stroke="#bbb" stroke-width="0.8"/><line x1="7" y1="8.5" x2="14.5" y2="8.5" stroke="#bbb" stroke-width="0.8"/></svg>
<svg class="a" style="left:319px;top:39px" width="15" height="17" viewBox="0 0 15 17"><rect x="0.8" y="2" width="13.4" height="14.5" rx="1" fill="#c77a10" stroke="#8f5902" stroke-width="1"/><rect x="4.5" y="0.5" width="6" height="3" rx="1" fill="#bbb" stroke="#777" stroke-width="0.6"/><path d="M3 4.5 H12 V14.5 H3 Z" fill="#f5f5f5" stroke="#ccc" stroke-width="0.6"/><line x1="4.5" y1="7" x2="10.5" y2="7" stroke="#bbb" stroke-width="0.8"/><line x1="4.5" y1="9" x2="10.5" y2="9" stroke="#bbb" stroke-width="0.8"/></svg>
<svg class="a" style="left:958px;top:40px" width="17" height="14" viewBox="0 0 17 14"><path d="M1 2.5 H6 L7.5 4 H13.5 V12.5 H1 Z" fill="#cfd3a6" stroke="#9aa07a" stroke-width="0.8"/><path d="M0.5 6.5 H15.5 L14 12.8 H1 Z" fill="#e3e6c3" stroke="#a4a981" stroke-width="0.8"/></svg>
<svg class="a" style="left:1044px;top:40px" width="17" height="13" viewBox="0 0 17 13"><path d="M0.5 6.5 L7 1 V4.2 H16 V8.8 H7 V12 Z" fill="#9a9c97" stroke="#8d8f8a" stroke-width="0.8"/></svg>
<svg class="a" style="left:1125px;top:40px" width="17" height="13" viewBox="0 0 17 13"><path d="M16.5 6.5 L10 1 V4.2 H1 V8.8 H10 V12 Z" fill="#9a9c97" stroke="#8d8f8a" stroke-width="0.8"/></svg>
<svg class="a" style="left:1320px;top:37px" width="18" height="18" viewBox="0 0 18 18"><circle cx="6.8" cy="6.8" r="5.6" fill="#fff" stroke="#111" stroke-width="1.5"/><path d="M6.8 3.8 V9.8 M3.8 6.8 H9.8" stroke="#111" stroke-width="1.7"/><line x1="10.8" y1="10.8" x2="16.5" y2="16.5" stroke="#111" stroke-width="2.4"/></svg>
<div class="a" style="left:525px;top:107px;width:180px;height:125px;background:#52524f;border:1px solid #393937;border-top:none;box-sizing:border-box;"></div>
<div class="a" style="left:527px;top:114px;width:175px;height:1px;background:repeating-linear-gradient(90deg,#454543 0 5px,transparent 5px 8px);"></div>
<div class="a" style="left:528px;top:211px;width:174px;height:17px;background:linear-gradient(#f9871a,#e46f0a);border-radius:3px;box-shadow:0 0 0 0.5px #b65a08;"></div>
<div class="t" style="left:545.3px;top:123.29px;font-size:11px;font-family:'Liberation Sans',sans-serif;">Dynamics</div>
<svg class="a" style="left:690px;top:123.8px" width="12" height="12"><path d="M3 1.8 L7.6 6 L3 10.2" fill="none" stroke="#f2f2f0" stroke-width="1.5"/></svg>
<div class="t" style="left:545.3px;top:141.19px;font-size:11px;font-family:'Liberation Sans',sans-serif;">Slurs</div>
<svg class="a" style="left:690px;top:141.7px" width="12" height="12"><path d="M3 1.8 L7.6 6 L3 10.2" fill="none" stroke="#f2f2f0" stroke-width="1.5"/></svg>
<div class="t" style="left:545.3px;top:159.09px;font-size:11px;font-family:'Liberation Sans',sans-serif;">Articulations</div>
<svg class="a" style="left:690px;top:159.6px" width="12" height="12"><path d="M3 1.8 L7.6 6 L3 10.2" fill="none" stroke="#f2f2f0" stroke-width="1.5"/></svg>
<div class="t" style="left:545.3px;top:176.99px;font-size:11px;font-family:'Liberation Sans',sans-serif;">Ornaments</div>
<svg class="a" style="left:690px;top:177.5px" width="12" height="12"><path d="M3 1.8 L7.6 6 L3 10.2" fill="none" stroke="#f2f2f0" stroke-width="1.5"/></svg>
<div class="t" style="left:545.3px;top:194.89px;font-size:11px;font-family:'Liberation Sans',sans-serif;">Text/Symbol</div>
<svg class="a" style="left:690px;top:195.4px" width="12" height="12"><path d="M3 1.8 L7.6 6 L3 10.2" fill="none" stroke="#f2f2f0" stroke-width="1.5"/></svg>
<div class="t" style="left:545.3px;top:212.79px;font-size:11px;font-family:'Liberation Sans',sans-serif;">Metronome-Markings</div>
<svg class="a" style="left:690px;top:213.3px" width="12" height="12"><path d="M3 1.8 L7.6 6 L3 10.2" fill="none" stroke="#f2f2f0" stroke-width="1.5"/></svg>
<div class="a" style="left:704px;top:208px;width:213px;height:33px;background:#52524f;border:1px solid #2f2f2d;box-sizing:border-box;"></div>
<div class="a" style="left:706px;top:221px;width:208px;height:18px;background:linear-gradient(#f9871a,#e46f0a);border-radius:3px;box-shadow:0 0 0 0.5px #b65a08;"></div>
<div class="t" style="left:724px;top:223.69px;font-size:11px;font-family:'Liberation Sans',sans-serif;">Add Metronome Marking to Chord</div>
<div class="a" style="left:932px;top:0px;width:2px;height:833px;background:#8a6a50;"></div>
<div class="a" style="left:1502px;top:12px;width:2px;height:821px;background:#7f817c;"></div>
<div class="a" style="left:934px;top:0px;width:568px;height:12px;background:linear-gradient(#d0d297 0 1.5px,#c3c58c 3px 8px,#cfd196 10px);"></div>
<div class="a" style="left:934px;top:0px;width:570px;height:1px;background:#8a6a50;"></div>
<div class="a" style="left:934px;top:11px;width:570px;height:1px;background:#8a6a50;"></div>
<div class="a" style="left:935px;top:2px;width:6px;height:7px;border:1px solid #a89873;"></div>
<div class="t" style="left:947.5px;top:0.53px;font-size:10.4px;font-family:'Liberation Mono',monospace;color:#111;-webkit-text-stroke:0.25px #111;transform:scaleX(0.8726);transform-origin:0 0;">/home/nils/.denemo/denemoprint.pdf</div>
<div class="a" style="left:934px;top:12px;width:568px;height:1px;background:#35373c;"></div>
<div class="a" style="left:934px;top:13px;width:568px;height:17px;background:#41413f;"></div>
<div class="a" style="left:934px;top:30px;width:568px;height:1px;background:#303030;"></div>
<div class="a" style="left:934px;top:31px;width:568px;height:1px;background:#959792;"></div>
<div class="t" style="left:940px;top:15.19px;font-size:11px;font-family:'Liberation Sans',sans-serif;">Datei</div>
<div class="a" style="left:940px;top:27px;width:7px;height:1px;background:#e6e6e4;"></div>
<div class="t" style="left:977.5px;top:15.19px;font-size:11px;font-family:'Liberation Sans',sans-serif;">Bearbeiten</div>
<div class="a" style="left:977.5px;top:27px;width:7px;height:1px;background:#e6e6e4;"></div>
<div class="t" style="left:1043px;top:15.19px;font-size:11px;font-family:'Liberation Sans',sans-serif;">Ansicht</div>
<div class="a" style="left:1043px;top:27px;width:7.5px;height:1px;background:#e6e6e4;"></div>
<div class="t" style="left:1091px;top:15.19px;font-size:11px;font-family:'Liberation Sans',sans-serif;">Gehe zu</div>
<div class="a" style="left:1091px;top:27px;width:8px;height:1px;background:#e6e6e4;"></div>
<div class="t" style="left:1143.5px;top:15.19px;font-size:11px;font-family:'Liberation Sans',sans-serif;">Hilfe</div>
<div class="a" style="left:1143.5px;top:27px;width:8px;height:1px;background:#e6e6e4;"></div>
<div class="t" style="left:949.6px;top:55.69px;font-size:11px;font-family:'Liberation Sans',sans-serif;">Öffnen</div>
<div class="a" style="left:1003px;top:40px;width:1px;height:26px;background:#7a7c77;"></div>
<div class="t" style="left:1012px;top:55.69px;font-size:11px;font-family:'Liberation Sans',sans-serif;color:#a5a7a2;">Vorherige Seite</div>
<div class="t" style="left:1098.6px;top:55.69px;font-size:11px;font-family:'Liberation Sans',sans-serif;color:#a5a7a2;">Nächste Seite</div>
<div class="a" style="left:1177.5px;top:40px;width:1px;height:26px;background:#7a7c77;"></div>
<div class="t" style="left:1183.2px;top:46.79px;font-size:11px;font-family:'Liberation Sans',sans-serif;">Seite</div>
<div class="a" style="left:1212px;top:43px;width:37px;height:19px;background:#b6b9b2;border:1px solid #5d5f5b;border-radius:3px;box-sizing:border-box;"></div>
<div class="t" style="left:1240px;top:46.79px;font-size:11px;font-family:'Liberation Sans',sans-serif;color:#000;">1</div>
<div class="t" style="left:1252.6px;top:46.79px;font-size:11px;font-family:'Liberation Sans',sans-serif;">von 1</div>
<div class="a" style="left:1285.5px;top:40px;width:1px;height:26px;background:#7a7c77;"></div>
<div class="t" style="left:1294px;top:55.79px;font-size:11px;font-family:'Liberation Sans',sans-serif;transform:scaleX(1.0319);transform-origin:0 0;">Heranzoomen</div>
<div class="a" style="left:1371px;top:43px;width:44px;height:19px;background:#b6b9b2;border:1px solid #5d5f5b;border-radius:3px;box-sizing:border-box;"></div>
<div class="t" style="left:1393px;top:46.79px;font-size:11px;font-family:'Liberation Sans',sans-serif;color:#000;">115</div>
<div class="t" style="left:1418px;top:46.79px;font-size:11px;font-family:'Liberation Sans',sans-serif;">%</div>
<svg class="a" style="left:1485px;top:48px" width="12" height="9"><path d="M2 2.5 L6 6.5 L10 2.5" fill="none" stroke="#eeeeec" stroke-width="1.5"/></svg>
<div class="a" style="left:934px;top:74px;width:568px;height:1px;background:#5f615c;"></div>
<div class="a" style="left:934px;top:75px;width:557px;height:325px;background:#868883;"></div>
<div class="a" style="left:934px;top:75px;width:557px;height:1px;background:#969893;"></div>
<div class="a" style="left:934px;top:75px;width:1px;height:325px;background:#969893;"></div>
<div class="a" style="left:943px;top:83px;width:536px;height:1px;background:#757772;"></div>
<div class="a" style="left:943px;top:83px;width:1px;height:317px;background:#757772;"></div>
<div class="a" style="left:1479px;top:84px;width:12px;height:316px;background:#868883;"></div>
<div class="a" style="left:1489px;top:75px;width:1px;height:325px;background:#6f716c;"></div>
<div class="a" style="left:944px;top:84px;width:535px;height:316px;background:#ffffff;"></div>
<div class="a" style="left:1491px;top:75px;width:12px;height:325px;background:#777975;border-left:1px solid #62645f;box-sizing:border-box;"></div>
<div class="a" style="left:1503px;top:0px;width:1px;height:833px;background:#8a6a50;"></div>
<div class="a" style="left:1491px;top:75px;width:11px;height:11px;background:#93958f;border:1px solid #6a6c67;border-radius:3px;box-sizing:border-box;"></div>
<svg class="a" style="left:1491px;top:75px" width="11" height="11"><path d="M3 7 L5.5 4.5 L8 7" fill="none" stroke="#e8e8e6" stroke-width="1.3"/></svg>
<div class="a" style="left:1491px;top:86px;width:12px;height:126px;background:#898b86;border:1px solid #62645f;box-shadow:inset 1px 0 0 #9c9e99;box-sizing:border-box;"></div>
<div class="a" style="left:1493px;top:146px;width:7px;height:1px;background:#6a6c67;"></div>
<div class="a" style="left:1493px;top:148px;width:7px;height:1px;background:#6a6c67;"></div>
<div class="a" style="left:1493px;top:150px;width:7px;height:1px;background:#6a6c67;"></div>
<div class="a" style="left:1491px;top:389px;width:11px;height:11px;background:#93958f;border:1px solid #6a6c67;border-radius:3px;box-sizing:border-box;"></div>
<svg class="a" style="left:1491px;top:389px" width="11" height="11"><path d="M3 4 L5.5 6.5 L8 4" fill="none" stroke="#e8e8e6" stroke-width="1.3"/></svg>
<div class="a" style="left:934px;top:400px;width:568px;height:1px;background:#62645f;"></div>
<div class="a" style="left:934px;top:417px;width:568px;height:1px;background:#8a6a50;"></div>
<div class="a" style="left:934px;top:418px;width:568px;height:11px;background:linear-gradient(#d0d297 0 1.5px,#c3c58c 3px 8px,#cfd196 10px);"></div>
<div class="a" style="left:934px;top:429px;width:568px;height:1px;background:#8a6a50;"></div>
<div class="a" style="left:935px;top:420px;width:6px;height:7px;border:1px solid #a89873;"></div>
<div class="t" style="left:946.4px;top:418.53px;font-size:10.4px;font-family:'Liberation Mono',monospace;color:#111;-webkit-text-stroke:0.25px #111;transform:scaleX(0.8820);transform-origin:0 0;">LilyPond Text - Denemo</div>
<div class="a" style="left:1247px;top:834px;width:1px;height:12px;background:#8a6a50;"></div>
<div class="t" style="left:1251.4px;top:834.52px;font-size:9.3px;font-family:'Liberation Mono',monospace;color:#111;transform:scaleX(0.9854);transform-origin:0 0;">0.17 0.22 0.09 | Do 2. Jul 21:28:03 CEST 2009</div>
<svg class="a" style="left:0;top:0" width="1504" height="846"><defs><clipPath id="pc"><rect x="944" y="84" width="535" height="316"/></clipPath></defs><g clip-path="url(#pc)"><text x="1131.6" y="116.5" font-family="Liberation Serif" font-size="15.2" font-weight="bold" fill="#111">Signiferumque verterem</text><text x="1378.0" y="129.3" font-family="Liberation Serif" font-size="9" fill="#111">Nils Gey - Wargsang</text><text x="1386.0" y="154.6" font-family="Liberation Serif" font-size="11.5" fill="#111">Fine</text><line x1="969" y1="158.20" x2="1453.6" y2="158.20" stroke="#6a6a6a" stroke-width="0.75"/><line x1="969" y1="161.92" x2="1453.6" y2="161.92" stroke="#6a6a6a" stroke-width="0.75"/><line x1="969" y1="165.64" x2="1453.6" y2="165.64" stroke="#6a6a6a" stroke-width="0.75"/><line x1="969" y1="169.36" x2="1453.6" y2="169.36" stroke="#6a6a6a" stroke-width="0.75"/><line x1="969" y1="173.08" x2="1453.6" y2="173.08" stroke="#6a6a6a" stroke-width="0.75"/><g transform="translate(972.30,152.35) scale(0.457)"><path d="M12.5 38.5 C9 39 7.5 35 10.5 32.5 C14 30 19 32.5 19 37.5 C19 43 14 45.5 9.5 45 C3.5 44.5 0.8 39 2 34 C3.5 27 9.5 24 12.5 19 C15.5 14 16 8 14.5 3.5 C13.5 0.5 11 0.5 9.5 3 C8 6 8.5 12 10 20 L13.5 50 C14 55 11.5 58 8 57.5 C5 57 4 54 6 52.5" fill="none" stroke="#000" stroke-width="2.3" stroke-linecap="round"/><circle cx="6.8" cy="54" r="3" fill="#000"/></g><line x1="986.49" y1="154.15" x2="986.49" y2="162.70" stroke="#000" stroke-width="0.50"/><line x1="988.11" y1="153.47" x2="988.11" y2="162.02" stroke="#000" stroke-width="0.50"/><line x1="985.50" y1="157.34" x2="989.10" y2="156.17" stroke="#000" stroke-width="1.30"/><line x1="985.50" y1="160.22" x2="989.10" y2="159.05" stroke="#000" stroke-width="1.30"/><line x1="990.59" y1="159.73" x2="990.59" y2="168.28" stroke="#000" stroke-width="0.50"/><line x1="992.21" y1="159.06" x2="992.21" y2="167.60" stroke="#000" stroke-width="0.50"/><line x1="989.60" y1="162.93" x2="993.20" y2="161.75" stroke="#000" stroke-width="1.30"/><line x1="989.60" y1="165.81" x2="993.20" y2="164.63" stroke="#000" stroke-width="1.30"/><line x1="994.39" y1="152.29" x2="994.39" y2="160.84" stroke="#000" stroke-width="0.50"/><line x1="996.01" y1="151.61" x2="996.01" y2="160.16" stroke="#000" stroke-width="0.50"/><line x1="993.40" y1="155.48" x2="997.00" y2="154.31" stroke="#000" stroke-width="1.30"/><line x1="993.40" y1="158.36" x2="997.00" y2="157.19" stroke="#000" stroke-width="1.30"/><line x1="1059.30" y1="158.20" x2="1059.30" y2="173.08" stroke="#000" stroke-width="1.6"/><line x1="1129.50" y1="158.20" x2="1129.50" y2="173.08" stroke="#000" stroke-width="1.6"/><line x1="1180.60" y1="158.20" x2="1180.60" y2="173.08" stroke="#000" stroke-width="1.6"/><line x1="1216.30" y1="158.20" x2="1216.30" y2="173.08" stroke="#000" stroke-width="1.6"/><line x1="1260.50" y1="158.20" x2="1260.50" y2="173.08" stroke="#000" stroke-width="1.6"/><line x1="1304.50" y1="158.20" x2="1304.50" y2="173.08" stroke="#000" stroke-width="1.6"/><line x1="1359.40" y1="158.20" x2="1359.40" y2="173.08" stroke="#000" stroke-width="1.6"/><line x1="1395.20" y1="158.20" x2="1395.20" y2="173.08" stroke="#000" stroke-width="1.6"/><line x1="1453.60" y1="158.20" x2="1453.60" y2="173.08" stroke="#000" stroke-width="1.6"/><line x1="1397.6" y1="158.20" x2="1397.6" y2="173.08" stroke="#000" stroke-width="2.2"/><text x="1001" y="165.40" font-family="Liberation Sans" font-weight="bold" font-size="8" fill="#000">6</text><text x="1001" y="173.00" font-family="Liberation Sans" font-weight="bold" font-size="8" fill="#000">8</text><line x1="969" y1="200.40" x2="1453.6" y2="200.40" stroke="#6a6a6a" stroke-width="0.75"/><line x1="969" y1="204.12" x2="1453.6" y2="204.12" stroke="#6a6a6a" stroke-width="0.75"/><line x1="969" y1="207.84" x2="1453.6" y2="207.84" stroke="#6a6a6a" stroke-width="0.75"/><line x1="969" y1="211.56" x2="1453.6" y2="211.56" stroke="#6a6a6a" stroke-width="0.75"/><line x1="969" y1="215.28" x2="1453.6" y2="215.28" stroke="#6a6a6a" stroke-width="0.75"/><g transform="translate(972.30,194.55) scale(0.457)"><path d="M12.5 38.5 C9 39 7.5 35 10.5 32.5 C14 30 19 32.5 19 37.5 C19 43 14 45.5 9.5 45 C3.5 44.5 0.8 39 2 34 C3.5 27 9.5 24 12.5 19 C15.5 14 16 8 14.5 3.5 C13.5 0.5 11 0.5 9.5 3 C8 6 8.5 12 10 20 L13.5 50 C14 55 11.5 58 8 57.5 C5 57 4 54 6 52.5" fill="none" stroke="#000" stroke-width="2.3" stroke-linecap="round"/><circle cx="6.8" cy="54" r="3" fill="#000"/></g><line x1="986.49" y1="196.35" x2="986.49" y2="204.90" stroke="#000" stroke-width="0.50"/><line x1="988.11" y1="195.68" x2="988.11" y2="204.22" stroke="#000" stroke-width="0.50"/><line x1="985.50" y1="199.55" x2="989.10" y2="198.38" stroke="#000" stroke-width="1.30"/><line x1="985.50" y1="202.43" x2="989.10" y2="201.25" stroke="#000" stroke-width="1.30"/><line x1="990.59" y1="201.93" x2="990.59" y2="210.48" stroke="#000" stroke-width="0.50"/><line x1="992.21" y1="201.26" x2="992.21" y2="209.81" stroke="#000" stroke-width="0.50"/><line x1="989.60" y1="205.13" x2="993.20" y2="203.96" stroke="#000" stroke-width="1.30"/><line x1="989.60" y1="208.01" x2="993.20" y2="206.84" stroke="#000" stroke-width="1.30"/><line x1="994.39" y1="194.49" x2="994.39" y2="203.04" stroke="#000" stroke-width="0.50"/><line x1="996.01" y1="193.81" x2="996.01" y2="202.36" stroke="#000" stroke-width="0.50"/><line x1="993.40" y1="197.69" x2="997.00" y2="196.51" stroke="#000" stroke-width="1.30"/><line x1="993.40" y1="200.56" x2="997.00" y2="199.39" stroke="#000" stroke-width="1.30"/><line x1="1059.30" y1="200.40" x2="1059.30" y2="215.28" stroke="#000" stroke-width="1.6"/><line x1="1129.50" y1="200.40" x2="1129.50" y2="215.28" stroke="#000" stroke-width="1.6"/><line x1="1180.60" y1="200.40" x2="1180.60" y2="215.28" stroke="#000" stroke-width="1.6"/><line x1="1216.30" y1="200.40" x2="1216.30" y2="215.28" stroke="#000" stroke-width="1.6"/><line x1="1260.50" y1="200.40" x2="1260.50" y2="215.28" stroke="#000" stroke-width="1.6"/><line x1="1304.50" y1="200.40" x2="1304.50" y2="215.28" stroke="#000" stroke-width="1.6"/><line x1="1359.40" y1="200.40" x2="1359.40" y2="215.28" stroke="#000" stroke-width="1.6"/><line x1="1395.20" y1="200.40" x2="1395.20" y2="215.28" stroke="#000" stroke-width="1.6"/><line x1="1453.60" y1="200.40" x2="1453.60" y2="215.28" stroke="#000" stroke-width="1.6"/><line x1="1397.6" y1="200.40" x2="1397.6" y2="215.28" stroke="#000" stroke-width="2.2"/><text x="1001" y="207.60" font-family="Liberation Sans" font-weight="bold" font-size="8" fill="#000">6</text><text x="1001" y="215.20" font-family="Liberation Sans" font-weight="bold" font-size="8" fill="#000">8</text><line x1="969" y1="242.60" x2="1453.6" y2="242.60" stroke="#6a6a6a" stroke-width="0.75"/><line x1="969" y1="246.32" x2="1453.6" y2="246.32" stroke="#6a6a6a" stroke-width="0.75"/><line x1="969" y1="250.04" x2="1453.6" y2="250.04" stroke="#6a6a6a" stroke-width="0.75"/><line x1="969" y1="253.76" x2="1453.6" y2="253.76" stroke="#6a6a6a" stroke-width="0.75"/><line x1="969" y1="257.48" x2="1453.6" y2="257.48" stroke="#6a6a6a" stroke-width="0.75"/><g transform="translate(972.30,236.75) scale(0.457)"><path d="M12.5 38.5 C9 39 7.5 35 10.5 32.5 C14 30 19 32.5 19 37.5 C19 43 14 45.5 9.5 45 C3.5 44.5 0.8 39 2 34 C3.5 27 9.5 24 12.5 19 C15.5 14 16 8 14.5 3.5 C13.5 0.5 11 0.5 9.5 3 C8 6 8.5 12 10 20 L13.5 50 C14 55 11.5 58 8 57.5 C5 57 4 54 6 52.5" fill="none" stroke="#000" stroke-width="2.3" stroke-linecap="round"/><circle cx="6.8" cy="54" r="3" fill="#000"/></g><line x1="986.49" y1="238.55" x2="986.49" y2="247.10" stroke="#000" stroke-width="0.50"/><line x1="988.11" y1="237.88" x2="988.11" y2="246.42" stroke="#000" stroke-width="0.50"/><line x1="985.50" y1="241.75" x2="989.10" y2="240.57" stroke="#000" stroke-width="1.30"/><line x1="985.50" y1="244.62" x2="989.10" y2="243.45" stroke="#000" stroke-width="1.30"/><line x1="990.59" y1="244.13" x2="990.59" y2="252.68" stroke="#000" stroke-width="0.50"/><line x1="992.21" y1="243.46" x2="992.21" y2="252.00" stroke="#000" stroke-width="0.50"/><line x1="989.60" y1="247.33" x2="993.20" y2="246.16" stroke="#000" stroke-width="1.30"/><line x1="989.60" y1="250.21" x2="993.20" y2="249.03" stroke="#000" stroke-width="1.30"/><line x1="994.39" y1="236.69" x2="994.39" y2="245.24" stroke="#000" stroke-width="0.50"/><line x1="996.01" y1="236.01" x2="996.01" y2="244.56" stroke="#000" stroke-width="0.50"/><line x1="993.40" y1="239.88" x2="997.00" y2="238.71" stroke="#000" stroke-width="1.30"/><line x1="993.40" y1="242.76" x2="997.00" y2="241.59" stroke="#000" stroke-width="1.30"/><line x1="1059.30" y1="242.60" x2="1059.30" y2="257.48" stroke="#000" stroke-width="1.6"/><line x1="1129.50" y1="242.60" x2="1129.50" y2="257.48" stroke="#000" stroke-width="1.6"/><line x1="1180.60" y1="242.60" x2="1180.60" y2="257.48" stroke="#000" stroke-width="1.6"/><line x1="1216.30" y1="242.60" x2="1216.30" y2="257.48" stroke="#000" stroke-width="1.6"/><line x1="1260.50" y1="242.60" x2="1260.50" y2="257.48" stroke="#000" stroke-width="1.6"/><line x1="1304.50" y1="242.60" x2="1304.50" y2="257.48" stroke="#000" stroke-width="1.6"/><line x1="1359.40" y1="242.60" x2="1359.40" y2="257.48" stroke="#000" stroke-width="1.6"/><line x1="1395.20" y1="242.60" x2="1395.20" y2="257.48" stroke="#000" stroke-width="1.6"/><line x1="1453.60" y1="242.60" x2="1453.60" y2="257.48" stroke="#000" stroke-width="1.6"/><line x1="1397.6" y1="242.60" x2="1397.6" y2="257.48" stroke="#000" stroke-width="2.2"/><text x="1001" y="249.80" font-family="Liberation Sans" font-weight="bold" font-size="8" fill="#000">6</text><text x="1001" y="257.40" font-family="Liberation Sans" font-weight="bold" font-size="8" fill="#000">8</text><line x1="969.1" y1="158.2" x2="969.1" y2="257.5" stroke="#000" stroke-width="0.9"/><ellipse cx="1015.40" cy="160.20" rx="2.40" ry="1.75" transform="rotate(-22 1015.40 160.20)" fill="#000"/><line x1="1013.20" y1="160.20" x2="1013.20" y2="172.70" stroke="#000" stroke-width="0.8"/><circle cx="1019.70" cy="159.30" r="0.75" fill="#000"/><ellipse cx="1035.30" cy="160.20" rx="2.40" ry="1.75" transform="rotate(-22 1035.30 160.20)" fill="#000"/><line x1="1033.10" y1="160.20" x2="1033.10" y2="172.70" stroke="#000" stroke-width="0.8"/><ellipse cx="1050.20" cy="161.50" rx="2.40" ry="1.75" transform="rotate(-22 1050.20 161.50)" fill="#000"/><line x1="1048.00" y1="161.50" x2="1048.00" y2="174.00" stroke="#000" stroke-width="0.8"/><path d="M1048.00 174.00 C1049.00 171.00 1052.00 170.00 1051.00 166.00" fill="none" stroke="#000" stroke-width="0.9"/><ellipse cx="1065.00" cy="160.20" rx="2.40" ry="1.75" transform="rotate(-22 1065.00 160.20)" fill="#000"/><line x1="1062.80" y1="160.20" x2="1062.80" y2="172.70" stroke="#000" stroke-width="0.8"/><path d="M1062.80 172.70 C1063.80 169.70 1066.80 168.70 1065.80 164.70" fill="none" stroke="#000" stroke-width="0.9"/><ellipse cx="1082.40" cy="164.80" rx="2.40" ry="1.75" transform="rotate(-22 1082.40 164.80)" fill="#000"/><line x1="1080.20" y1="164.80" x2="1080.20" y2="177.30" stroke="#000" stroke-width="0.8"/><ellipse cx="1099.80" cy="168.10" rx="2.40" ry="1.75" transform="rotate(-22 1099.80 168.10)" fill="#000"/><line x1="1102.00" y1="168.10" x2="1102.00" y2="155.60" stroke="#000" stroke-width="0.8"/><ellipse cx="1119.00" cy="165.60" rx="2.40" ry="1.75" transform="rotate(-22 1119.00 165.60)" fill="#000"/><line x1="1116.80" y1="165.60" x2="1116.80" y2="178.10" stroke="#000" stroke-width="0.8"/><path d="M1116.80 178.10 C1117.80 175.10 1120.80 174.10 1119.80 170.10" fill="none" stroke="#000" stroke-width="0.9"/><ellipse cx="1136.40" cy="165.60" rx="2.40" ry="1.75" transform="rotate(-22 1136.40 165.60)" fill="#000"/><line x1="1134.20" y1="165.60" x2="1134.20" y2="178.10" stroke="#000" stroke-width="0.8"/><circle cx="1140.70" cy="164.70" r="0.75" fill="#000"/><ellipse cx="1154.60" cy="167.30" rx="2.40" ry="1.75" transform="rotate(-22 1154.60 167.30)" fill="#000"/><line x1="1156.80" y1="167.30" x2="1156.80" y2="154.80" stroke="#000" stroke-width="0.8"/><ellipse cx="1171.10" cy="169.00" rx="2.40" ry="1.75" transform="rotate(-22 1171.10 169.00)" fill="#000"/><line x1="1173.30" y1="169.00" x2="1173.30" y2="156.50" stroke="#000" stroke-width="0.8"/><path d="M1173.30 156.50 C1174.30 159.50 1177.30 160.50 1176.30 164.50" fill="none" stroke="#000" stroke-width="0.9"/><ellipse cx="1191.00" cy="165.60" rx="2.10" ry="1.40" transform="rotate(-25 1191.00 165.60)" fill="none" stroke="#000" stroke-width="0.9"/><line x1="1188.80" y1="165.60" x2="1188.80" y2="178.10" stroke="#000" stroke-width="0.8"/><circle cx="1195.30" cy="164.70" r="0.75" fill="#000"/><ellipse cx="1222.40" cy="167.30" rx="2.40" ry="1.75" transform="rotate(-22 1222.40 167.30)" fill="#000"/><line x1="1224.60" y1="167.30" x2="1224.60" y2="154.80" stroke="#000" stroke-width="0.8"/><circle cx="1226.70" cy="166.40" r="0.75" fill="#000"/><ellipse cx="1241.50" cy="165.60" rx="2.40" ry="1.75" transform="rotate(-22 1241.50 165.60)" fill="#000"/><line x1="1239.30" y1="165.60" x2="1239.30" y2="178.10" stroke="#000" stroke-width="0.8"/><circle cx="1245.80" cy="164.70" r="0.75" fill="#000"/><ellipse cx="1267.10" cy="163.70" rx="2.40" ry="1.75" transform="rotate(-22 1267.10 163.70)" fill="#000"/><line x1="1264.90" y1="163.70" x2="1264.90" y2="176.20" stroke="#000" stroke-width="0.8"/><circle cx="1271.40" cy="162.80" r="0.75" fill="#000"/><ellipse cx="1284.50" cy="162.30" rx="2.40" ry="1.75" transform="rotate(-22 1284.50 162.30)" fill="#000"/><line x1="1282.30" y1="162.30" x2="1282.30" y2="174.80" stroke="#000" stroke-width="0.8"/><circle cx="1288.80" cy="161.40" r="0.75" fill="#000"/><ellipse cx="1311.80" cy="161.00" rx="2.40" ry="1.75" transform="rotate(-22 1311.80 161.00)" fill="#000"/><line x1="1309.60" y1="161.00" x2="1309.60" y2="173.50" stroke="#000" stroke-width="0.8"/><circle cx="1316.10" cy="160.10" r="0.75" fill="#000"/><ellipse cx="1328.70" cy="161.00" rx="2.40" ry="1.75" transform="rotate(-22 1328.70 161.00)" fill="#000"/><line x1="1326.50" y1="161.00" x2="1326.50" y2="173.50" stroke="#000" stroke-width="0.8"/><ellipse cx="1345.60" cy="163.00" rx="2.40" ry="1.75" transform="rotate(-22 1345.60 163.00)" fill="#000"/><line x1="1343.40" y1="163.00" x2="1343.40" y2="175.50" stroke="#000" stroke-width="0.8"/><ellipse cx="1353.40" cy="163.00" rx="2.40" ry="1.75" transform="rotate(-22 1353.40 163.00)" fill="#000"/><line x1="1351.20" y1="163.00" x2="1351.20" y2="175.50" stroke="#000" stroke-width="0.8"/><ellipse cx="1370.40" cy="159.70" rx="2.10" ry="1.40" transform="rotate(-25 1370.40 159.70)" fill="none" stroke="#000" stroke-width="0.9"/><line x1="1368.20" y1="159.70" x2="1368.20" y2="172.20" stroke="#000" stroke-width="0.8"/><circle cx="1374.70" cy="158.80" r="0.75" fill="#000"/><ellipse cx="1405.50" cy="161.00" rx="2.40" ry="1.75" transform="rotate(-22 1405.50 161.00)" fill="#000"/><line x1="1403.30" y1="161.00" x2="1403.30" y2="173.50" stroke="#000" stroke-width="0.8"/><circle cx="1409.80" cy="160.10" r="0.75" fill="#000"/><ellipse cx="1421.00" cy="164.50" rx="2.40" ry="1.75" transform="rotate(-22 1421.00 164.50)" fill="#000"/><line x1="1418.80" y1="164.50" x2="1418.80" y2="177.00" stroke="#000" stroke-width="0.8"/><ellipse cx="1443.20" cy="164.50" rx="2.40" ry="1.75" transform="rotate(-22 1443.20 164.50)" fill="#000"/><line x1="1441.00" y1="164.50" x2="1441.00" y2="177.00" stroke="#000" stroke-width="0.8"/><path d="M1441.00 177.00 C1442.00 174.00 1445.00 173.00 1444.00 169.00" fill="none" stroke="#000" stroke-width="0.9"/><ellipse cx="1014.60" cy="206.20" rx="2.40" ry="1.75" transform="rotate(-22 1014.60 206.20)" fill="#000"/><line x1="1012.40" y1="206.20" x2="1012.40" y2="218.70" stroke="#000" stroke-width="0.8"/><circle cx="1018.90" cy="205.30" r="0.75" fill="#000"/><ellipse cx="1034.50" cy="209.50" rx="2.40" ry="1.75" transform="rotate(-22 1034.50 209.50)" fill="#000"/><line x1="1036.70" y1="209.50" x2="1036.70" y2="197.00" stroke="#000" stroke-width="0.8"/><circle cx="1038.80" cy="208.60" r="0.75" fill="#000"/><ellipse cx="1065.90" cy="206.20" rx="2.40" ry="1.75" transform="rotate(-22 1065.90 206.20)" fill="#000"/><line x1="1063.70" y1="206.20" x2="1063.70" y2="218.70" stroke="#000" stroke-width="0.8"/><circle cx="1070.20" cy="205.30" r="0.75" fill="#000"/><ellipse cx="1099.80" cy="212.80" rx="2.40" ry="1.75" transform="rotate(-22 1099.80 212.80)" fill="#000"/><line x1="1102.00" y1="212.80" x2="1102.00" y2="200.30" stroke="#000" stroke-width="0.8"/><ellipse cx="1119.50" cy="215.30" rx="2.40" ry="1.75" transform="rotate(-22 1119.50 215.30)" fill="#000"/><line x1="1121.70" y1="215.30" x2="1121.70" y2="202.80" stroke="#000" stroke-width="0.8"/><path d="M1121.70 202.80 C1122.70 205.80 1125.70 206.80 1124.70 210.80" fill="none" stroke="#000" stroke-width="0.9"/><ellipse cx="1136.40" cy="212.80" rx="2.40" ry="1.75" transform="rotate(-22 1136.40 212.80)" fill="#000"/><line x1="1138.60" y1="212.80" x2="1138.60" y2="200.30" stroke="#000" stroke-width="0.8"/><circle cx="1140.70" cy="211.90" r="0.75" fill="#000"/><ellipse cx="1155.40" cy="215.30" rx="2.40" ry="1.75" transform="rotate(-22 1155.40 215.30)" fill="#000"/><line x1="1157.60" y1="215.30" x2="1157.60" y2="202.80" stroke="#000" stroke-width="0.8"/><circle cx="1159.70" cy="214.40" r="0.75" fill="#000"/><ellipse cx="1191.80" cy="212.80" rx="2.10" ry="1.40" transform="rotate(-25 1191.80 212.80)" fill="none" stroke="#000" stroke-width="0.9"/><line x1="1194.00" y1="212.80" x2="1194.00" y2="200.30" stroke="#000" stroke-width="0.8"/><circle cx="1196.10" cy="211.90" r="0.75" fill="#000"/><ellipse cx="1222.40" cy="215.30" rx="2.40" ry="1.75" transform="rotate(-22 1222.40 215.30)" fill="#000"/><line x1="1224.60" y1="215.30" x2="1224.60" y2="202.80" stroke="#000" stroke-width="0.8"/><circle cx="1226.70" cy="214.40" r="0.75" fill="#000"/><ellipse cx="1242.30" cy="212.80" rx="2.40" ry="1.75" transform="rotate(-22 1242.30 212.80)" fill="#000"/><line x1="1244.50" y1="212.80" x2="1244.50" y2="200.30" stroke="#000" stroke-width="0.8"/><circle cx="1246.60" cy="211.90" r="0.75" fill="#000"/><ellipse cx="1267.60" cy="210.40" rx="2.40" ry="1.75" transform="rotate(-22 1267.60 210.40)" fill="#000"/><line x1="1269.80" y1="210.40" x2="1269.80" y2="197.90" stroke="#000" stroke-width="0.8"/><circle cx="1271.90" cy="209.50" r="0.75" fill="#000"/><ellipse cx="1285.80" cy="209.00" rx="2.40" ry="1.75" transform="rotate(-22 1285.80 209.00)" fill="#000"/><line x1="1288.00" y1="209.00" x2="1288.00" y2="196.50" stroke="#000" stroke-width="0.8"/><circle cx="1290.10" cy="208.10" r="0.75" fill="#000"/><ellipse cx="1310.50" cy="207.80" rx="2.40" ry="1.75" transform="rotate(-22 1310.50 207.80)" fill="#000"/><line x1="1308.30" y1="207.80" x2="1308.30" y2="220.30" stroke="#000" stroke-width="0.8"/><circle cx="1314.80" cy="206.90" r="0.75" fill="#000"/><ellipse cx="1331.30" cy="209.00" rx="2.40" ry="1.75" transform="rotate(-22 1331.30 209.00)" fill="#000"/><line x1="1329.10" y1="209.00" x2="1329.10" y2="221.50" stroke="#000" stroke-width="0.8"/><circle cx="1335.60" cy="208.10" r="0.75" fill="#000"/><ellipse cx="1373.00" cy="207.80" rx="2.10" ry="1.40" transform="rotate(-25 1373.00 207.80)" fill="none" stroke="#000" stroke-width="0.9"/><line x1="1370.80" y1="207.80" x2="1370.80" y2="220.30" stroke="#000" stroke-width="0.8"/><circle cx="1377.30" cy="206.90" r="0.75" fill="#000"/><ellipse cx="1405.50" cy="209.00" rx="2.40" ry="1.75" transform="rotate(-22 1405.50 209.00)" fill="#000"/><line x1="1407.70" y1="209.00" x2="1407.70" y2="196.50" stroke="#000" stroke-width="0.8"/><circle cx="1409.80" cy="208.10" r="0.75" fill="#000"/><ellipse cx="1422.40" cy="209.00" rx="2.40" ry="1.75" transform="rotate(-22 1422.40 209.00)" fill="#000"/><line x1="1424.60" y1="209.00" x2="1424.60" y2="196.50" stroke="#000" stroke-width="0.8"/><ellipse cx="1434.00" cy="210.00" rx="2.40" ry="1.75" transform="rotate(-22 1434.00 210.00)" fill="#000"/><line x1="1436.20" y1="210.00" x2="1436.20" y2="197.50" stroke="#000" stroke-width="0.8"/><ellipse cx="1444.50" cy="211.50" rx="2.40" ry="1.75" transform="rotate(-22 1444.50 211.50)" fill="#000"/><line x1="1446.70" y1="211.50" x2="1446.70" y2="199.00" stroke="#000" stroke-width="0.8"/><ellipse cx="1015.40" cy="256.60" rx="2.40" ry="1.75" transform="rotate(-22 1015.40 256.60)" fill="#000"/><line x1="1017.60" y1="256.60" x2="1017.60" y2="244.10" stroke="#000" stroke-width="0.8"/><circle cx="1019.70" cy="255.70" r="0.75" fill="#000"/><ellipse cx="1035.30" cy="254.20" rx="2.40" ry="1.75" transform="rotate(-22 1035.30 254.20)" fill="#000"/><line x1="1037.50" y1="254.20" x2="1037.50" y2="241.70" stroke="#000" stroke-width="0.8"/><circle cx="1039.60" cy="253.30" r="0.75" fill="#000"/><ellipse cx="1065.90" cy="256.60" rx="2.10" ry="1.40" transform="rotate(-25 1065.90 256.60)" fill="none" stroke="#000" stroke-width="0.9"/><line x1="1068.10" y1="256.60" x2="1068.10" y2="244.10" stroke="#000" stroke-width="0.8"/><circle cx="1070.20" cy="255.70" r="0.75" fill="#000"/><ellipse cx="1136.40" cy="258.30" rx="2.40" ry="1.75" transform="rotate(-22 1136.40 258.30)" fill="#000"/><line x1="1138.60" y1="258.30" x2="1138.60" y2="245.80" stroke="#000" stroke-width="0.8"/><circle cx="1140.70" cy="257.40" r="0.75" fill="#000"/><ellipse cx="1155.40" cy="260.00" rx="2.40" ry="1.75" transform="rotate(-22 1155.40 260.00)" fill="#000"/><line x1="1157.60" y1="260.00" x2="1157.60" y2="247.50" stroke="#000" stroke-width="0.8"/><circle cx="1159.70" cy="259.10" r="0.75" fill="#000"/><ellipse cx="1192.70" cy="261.60" rx="2.10" ry="1.40" transform="rotate(-25 1192.70 261.60)" fill="none" stroke="#000" stroke-width="0.9"/><line x1="1194.90" y1="261.60" x2="1194.90" y2="249.10" stroke="#000" stroke-width="0.8"/><circle cx="1197.00" cy="260.70" r="0.75" fill="#000"/><ellipse cx="1223.30" cy="260.00" rx="2.40" ry="1.75" transform="rotate(-22 1223.30 260.00)" fill="#000"/><line x1="1225.50" y1="260.00" x2="1225.50" y2="247.50" stroke="#000" stroke-width="0.8"/><circle cx="1227.60" cy="259.10" r="0.75" fill="#000"/><ellipse cx="1242.30" cy="258.30" rx="2.40" ry="1.75" transform="rotate(-22 1242.30 258.30)" fill="#000"/><line x1="1244.50" y1="258.30" x2="1244.50" y2="245.80" stroke="#000" stroke-width="0.8"/><circle cx="1246.60" cy="257.40" r="0.75" fill="#000"/><ellipse cx="1267.10" cy="256.60" rx="2.40" ry="1.75" transform="rotate(-22 1267.10 256.60)" fill="#000"/><line x1="1269.30" y1="256.60" x2="1269.30" y2="244.10" stroke="#000" stroke-width="0.8"/><circle cx="1271.40" cy="255.70" r="0.75" fill="#000"/><ellipse cx="1287.00" cy="256.00" rx="2.40" ry="1.75" transform="rotate(-22 1287.00 256.00)" fill="#000"/><line x1="1289.20" y1="256.00" x2="1289.20" y2="243.50" stroke="#000" stroke-width="0.8"/><circle cx="1291.30" cy="255.10" r="0.75" fill="#000"/><ellipse cx="1311.80" cy="254.70" rx="2.40" ry="1.75" transform="rotate(-22 1311.80 254.70)" fill="#000"/><line x1="1314.00" y1="254.70" x2="1314.00" y2="242.20" stroke="#000" stroke-width="0.8"/><circle cx="1316.10" cy="253.80" r="0.75" fill="#000"/><ellipse cx="1332.60" cy="253.40" rx="2.40" ry="1.75" transform="rotate(-22 1332.60 253.40)" fill="#000"/><line x1="1334.80" y1="253.40" x2="1334.80" y2="240.90" stroke="#000" stroke-width="0.8"/><circle cx="1336.90" cy="252.50" r="0.75" fill="#000"/><ellipse cx="1373.00" cy="256.00" rx="2.10" ry="1.40" transform="rotate(-25 1373.00 256.00)" fill="none" stroke="#000" stroke-width="0.9"/><line x1="1375.20" y1="256.00" x2="1375.20" y2="243.50" stroke="#000" stroke-width="0.8"/><circle cx="1377.30" cy="255.10" r="0.75" fill="#000"/><line x1="1044.39" y1="157.45" x2="1044.39" y2="166.00" stroke="#000" stroke-width="0.50"/><line x1="1046.01" y1="156.78" x2="1046.01" y2="165.32" stroke="#000" stroke-width="0.50"/><line x1="1043.40" y1="160.65" x2="1047.00" y2="159.47" stroke="#000" stroke-width="1.30"/><line x1="1043.40" y1="163.53" x2="1047.00" y2="162.35" stroke="#000" stroke-width="1.30"/><line x1="1324.19" y1="156.95" x2="1324.19" y2="165.50" stroke="#000" stroke-width="0.50"/><line x1="1325.81" y1="156.28" x2="1325.81" y2="164.82" stroke="#000" stroke-width="0.50"/><line x1="1323.20" y1="160.15" x2="1326.80" y2="158.97" stroke="#000" stroke-width="1.30"/><line x1="1323.20" y1="163.03" x2="1326.80" y2="161.85" stroke="#000" stroke-width="1.30"/><line x1="1024.19" y1="205.45" x2="1024.19" y2="214.00" stroke="#000" stroke-width="0.50"/><line x1="1025.81" y1="204.78" x2="1025.81" y2="213.32" stroke="#000" stroke-width="0.50"/><line x1="1023.20" y1="208.65" x2="1026.80" y2="207.47" stroke="#000" stroke-width="1.30"/><line x1="1023.20" y1="211.53" x2="1026.80" y2="210.35" stroke="#000" stroke-width="1.30"/><line x1="1325.19" y1="204.95" x2="1325.19" y2="213.50" stroke="#000" stroke-width="0.50"/><line x1="1326.81" y1="204.28" x2="1326.81" y2="212.82" stroke="#000" stroke-width="0.50"/><line x1="1324.20" y1="208.15" x2="1327.80" y2="206.97" stroke="#000" stroke-width="1.30"/><line x1="1324.20" y1="211.03" x2="1327.80" y2="209.85" stroke="#000" stroke-width="1.30"/><line x1="1343.6" y1="175.3" x2="1352" y2="175.3" stroke="#000" stroke-width="1.2"/><line x1="1343.6" y1="173.3" x2="1352" y2="173.3" stroke="#000" stroke-width="1.2"/><line x1="1424.6" y1="197" x2="1446.5" y2="199" stroke="#000" stroke-width="1.3"/><rect x="1423.5" y="247" width="5" height="2" fill="#000"/><line x1="1188.5" y1="262" x2="1197" y2="262" stroke="#000" stroke-width="0.6"/><text x="1183.5" y="189.4" font-family="Liberation Serif" font-size="9.4" fill="#222" textLength="18.1" lengthAdjust="spacingAndGlyphs">rem.</text><text x="1219.5" y="189.4" font-family="Liberation Serif" font-size="9.4" fill="#222" textLength="31.2" lengthAdjust="spacingAndGlyphs">E - nim</text><text x="1263.7" y="189.4" font-family="Liberation Serif" font-size="9.4" fill="#222" textLength="71.5" lengthAdjust="spacingAndGlyphs">re - pre - hen - de</text><text x="1347.8" y="189.4" font-family="Liberation Serif" font-size="9.4" fill="#222" textLength="3.0" lengthAdjust="spacingAndGlyphs">-</text><text x="1362.5" y="189.4" font-family="Liberation Serif" font-size="9.4" fill="#222" textLength="19.5" lengthAdjust="spacingAndGlyphs">runt.</text><text x="1183.5" y="231.5" font-family="Liberation Serif" font-size="9.4" fill="#222" textLength="18.1" lengthAdjust="spacingAndGlyphs">rem.</text><text x="1219.5" y="231.5" font-family="Liberation Serif" font-size="9.4" fill="#222" textLength="31.2" lengthAdjust="spacingAndGlyphs">E - nim</text><text x="1263.7" y="231.5" font-family="Liberation Serif" font-size="9.4" fill="#222" textLength="71.5" lengthAdjust="spacingAndGlyphs">re - pre - hen - de</text><text x="1347.8" y="231.5" font-family="Liberation Serif" font-size="9.4" fill="#222" textLength="3.0" lengthAdjust="spacingAndGlyphs">-</text><text x="1362.5" y="231.5" font-family="Liberation Serif" font-size="9.4" fill="#222" textLength="19.5" lengthAdjust="spacingAndGlyphs">runt.</text><text x="1183.5" y="273.5" font-family="Liberation Serif" font-size="9.4" fill="#222" textLength="18.1" lengthAdjust="spacingAndGlyphs">rem.</text><text x="1219.5" y="273.5" font-family="Liberation Serif" font-size="9.4" fill="#222" textLength="31.2" lengthAdjust="spacingAndGlyphs">E - nim</text><text x="1263.7" y="273.5" font-family="Liberation Serif" font-size="9.4" fill="#222" textLength="71.5" lengthAdjust="spacingAndGlyphs">re - pre - hen - de</text><text x="1347.8" y="273.5" font-family="Liberation Serif" font-size="9.4" fill="#222" textLength="3.0" lengthAdjust="spacingAndGlyphs">-</text><text x="1362.5" y="273.5" font-family="Liberation Serif" font-size="9.4" fill="#222" textLength="19.5" lengthAdjust="spacingAndGlyphs">runt.</text><text x="1008.9" y="189.4" font-family="Liberation Serif" font-size="9.4" fill="#222" textLength="82.6" lengthAdjust="spacingAndGlyphs">Sig - ni - fe-rum-que</text><text x="1097.6" y="189.4" font-family="Liberation Serif" font-size="9.4" fill="#222" textLength="12.8" lengthAdjust="spacingAndGlyphs">ver</text><text x="1121.3" y="189.4" font-family="Liberation Serif" font-size="9.4" fill="#222" textLength="3.0" lengthAdjust="spacingAndGlyphs">-</text><text x="1134.6" y="189.4" font-family="Liberation Serif" font-size="9.4" fill="#222" textLength="7.6" lengthAdjust="spacingAndGlyphs">te</text><text x="1161.9" y="189.4" font-family="Liberation Serif" font-size="9.4" fill="#222" textLength="3.0" lengthAdjust="spacingAndGlyphs">-</text><text x="1399.0" y="189.4" font-family="Liberation Serif" font-size="9.4" fill="#222" textLength="13.0" lengthAdjust="spacingAndGlyphs">Sit</text><text x="1418.5" y="189.4" font-family="Liberation Serif" font-size="9.4" fill="#222" textLength="31.2" lengthAdjust="spacingAndGlyphs">no - bis</text><text x="1008.9" y="231.5" font-family="Liberation Serif" font-size="9.4" fill="#222" textLength="30.1" lengthAdjust="spacingAndGlyphs">Sig - ni</text><text x="1051.0" y="231.5" font-family="Liberation Serif" font-size="9.4" fill="#222" textLength="3.0" lengthAdjust="spacingAndGlyphs">-</text><text x="1062.7" y="231.5" font-family="Liberation Serif" font-size="9.4" fill="#222" textLength="8.0" lengthAdjust="spacingAndGlyphs">fe</text><text x="1080.0" y="231.5" font-family="Liberation Serif" font-size="9.4" fill="#222" textLength="3.0" lengthAdjust="spacingAndGlyphs">-</text><text x="1091.5" y="231.5" font-family="Liberation Serif" font-size="9.4" fill="#222" textLength="68.3" lengthAdjust="spacingAndGlyphs">rum-que ver - te</text><text x="1171.0" y="231.5" font-family="Liberation Serif" font-size="9.4" fill="#222" textLength="3.0" lengthAdjust="spacingAndGlyphs">-</text><text x="1399.0" y="231.5" font-family="Liberation Serif" font-size="9.4" fill="#222" textLength="13.0" lengthAdjust="spacingAndGlyphs">Sit</text><text x="1421.0" y="231.5" font-family="Liberation Serif" font-size="9.4" fill="#222" textLength="28.7" lengthAdjust="spacingAndGlyphs">no - bis</text><text x="1008.9" y="273.5" font-family="Liberation Serif" font-size="9.4" fill="#222" textLength="30.1" lengthAdjust="spacingAndGlyphs">Sig - ni</text><text x="1051.0" y="273.5" font-family="Liberation Serif" font-size="9.4" fill="#222" textLength="3.0" lengthAdjust="spacingAndGlyphs">-</text><text x="1062.7" y="273.5" font-family="Liberation Serif" font-size="9.4" fill="#222" textLength="8.4" lengthAdjust="spacingAndGlyphs">fe.</text><text x="1130.0" y="273.5" font-family="Liberation Serif" font-size="9.4" fill="#222" textLength="29.8" lengthAdjust="spacingAndGlyphs">ver - te</text><text x="1171.0" y="273.5" font-family="Liberation Serif" font-size="9.4" fill="#222" textLength="3.0" lengthAdjust="spacingAndGlyphs">-</text><line x1="970" y1="303.70" x2="1452.9" y2="303.70" stroke="#6a6a6a" stroke-width="0.75"/><line x1="970" y1="307.42" x2="1452.9" y2="307.42" stroke="#6a6a6a" stroke-width="0.75"/><line x1="970" y1="311.14" x2="1452.9" y2="311.14" stroke="#6a6a6a" stroke-width="0.75"/><line x1="970" y1="314.86" x2="1452.9" y2="314.86" stroke="#6a6a6a" stroke-width="0.75"/><line x1="970" y1="318.58" x2="1452.9" y2="318.58" stroke="#6a6a6a" stroke-width="0.75"/><g transform="translate(973.30,297.85) scale(0.457)"><path d="M12.5 38.5 C9 39 7.5 35 10.5 32.5 C14 30 19 32.5 19 37.5 C19 43 14 45.5 9.5 45 C3.5 44.5 0.8 39 2 34 C3.5 27 9.5 24 12.5 19 C15.5 14 16 8 14.5 3.5 C13.5 0.5 11 0.5 9.5 3 C8 6 8.5 12 10 20 L13.5 50 C14 55 11.5 58 8 57.5 C5 57 4 54 6 52.5" fill="none" stroke="#000" stroke-width="2.3" stroke-linecap="round"/><circle cx="6.8" cy="54" r="3" fill="#000"/></g><line x1="986.49" y1="299.65" x2="986.49" y2="308.20" stroke="#000" stroke-width="0.50"/><line x1="988.11" y1="298.97" x2="988.11" y2="307.52" stroke="#000" stroke-width="0.50"/><line x1="985.50" y1="302.84" x2="989.10" y2="301.68" stroke="#000" stroke-width="1.30"/><line x1="985.50" y1="305.72" x2="989.10" y2="304.56" stroke="#000" stroke-width="1.30"/><line x1="990.59" y1="305.23" x2="990.59" y2="313.78" stroke="#000" stroke-width="0.50"/><line x1="992.21" y1="304.55" x2="992.21" y2="313.10" stroke="#000" stroke-width="0.50"/><line x1="989.60" y1="308.42" x2="993.20" y2="307.25" stroke="#000" stroke-width="1.30"/><line x1="989.60" y1="311.30" x2="993.20" y2="310.13" stroke="#000" stroke-width="1.30"/><line x1="994.39" y1="297.79" x2="994.39" y2="306.34" stroke="#000" stroke-width="0.50"/><line x1="996.01" y1="297.11" x2="996.01" y2="305.66" stroke="#000" stroke-width="0.50"/><line x1="993.40" y1="300.98" x2="997.00" y2="299.81" stroke="#000" stroke-width="1.30"/><line x1="993.40" y1="303.86" x2="997.00" y2="302.69" stroke="#000" stroke-width="1.30"/><line x1="1062.70" y1="303.70" x2="1062.70" y2="318.58" stroke="#000" stroke-width="1.6"/><line x1="1122.00" y1="303.70" x2="1122.00" y2="318.58" stroke="#000" stroke-width="1.6"/><line x1="1165.30" y1="303.70" x2="1165.30" y2="318.58" stroke="#000" stroke-width="1.6"/><line x1="1225.60" y1="303.70" x2="1225.60" y2="318.58" stroke="#000" stroke-width="1.6"/><line x1="1287.80" y1="303.70" x2="1287.80" y2="318.58" stroke="#000" stroke-width="1.6"/><line x1="1349.00" y1="303.70" x2="1349.00" y2="318.58" stroke="#000" stroke-width="1.6"/><line x1="1384.60" y1="303.70" x2="1384.60" y2="318.58" stroke="#000" stroke-width="1.6"/><line x1="1453.20" y1="303.70" x2="1453.20" y2="318.58" stroke="#000" stroke-width="1.6"/><line x1="970" y1="345.60" x2="1452.9" y2="345.60" stroke="#6a6a6a" stroke-width="0.75"/><line x1="970" y1="349.32" x2="1452.9" y2="349.32" stroke="#6a6a6a" stroke-width="0.75"/><line x1="970" y1="353.04" x2="1452.9" y2="353.04" stroke="#6a6a6a" stroke-width="0.75"/><line x1="970" y1="356.76" x2="1452.9" y2="356.76" stroke="#6a6a6a" stroke-width="0.75"/><line x1="970" y1="360.48" x2="1452.9" y2="360.48" stroke="#6a6a6a" stroke-width="0.75"/><g transform="translate(973.30,339.75) scale(0.457)"><path d="M12.5 38.5 C9 39 7.5 35 10.5 32.5 C14 30 19 32.5 19 37.5 C19 43 14 45.5 9.5 45 C3.5 44.5 0.8 39 2 34 C3.5 27 9.5 24 12.5 19 C15.5 14 16 8 14.5 3.5 C13.5 0.5 11 0.5 9.5 3 C8 6 8.5 12 10 20 L13.5 50 C14 55 11.5 58 8 57.5 C5 57 4 54 6 52.5" fill="none" stroke="#000" stroke-width="2.3" stroke-linecap="round"/><circle cx="6.8" cy="54" r="3" fill="#000"/></g><line x1="986.49" y1="341.55" x2="986.49" y2="350.10" stroke="#000" stroke-width="0.50"/><line x1="988.11" y1="340.88" x2="988.11" y2="349.43" stroke="#000" stroke-width="0.50"/><line x1="985.50" y1="344.75" x2="989.10" y2="343.58" stroke="#000" stroke-width="1.30"/><line x1="985.50" y1="347.62" x2="989.10" y2="346.46" stroke="#000" stroke-width="1.30"/><line x1="990.59" y1="347.13" x2="990.59" y2="355.68" stroke="#000" stroke-width="0.50"/><line x1="992.21" y1="346.45" x2="992.21" y2="355.00" stroke="#000" stroke-width="0.50"/><line x1="989.60" y1="350.32" x2="993.20" y2="349.16" stroke="#000" stroke-width="1.30"/><line x1="989.60" y1="353.20" x2="993.20" y2="352.04" stroke="#000" stroke-width="1.30"/><line x1="994.39" y1="339.69" x2="994.39" y2="348.24" stroke="#000" stroke-width="0.50"/><line x1="996.01" y1="339.01" x2="996.01" y2="347.56" stroke="#000" stroke-width="0.50"/><line x1="993.40" y1="342.88" x2="997.00" y2="341.72" stroke="#000" stroke-width="1.30"/><line x1="993.40" y1="345.76" x2="997.00" y2="344.60" stroke="#000" stroke-width="1.30"/><line x1="1062.70" y1="345.60" x2="1062.70" y2="360.48" stroke="#000" stroke-width="1.6"/><line x1="1122.00" y1="345.60" x2="1122.00" y2="360.48" stroke="#000" stroke-width="1.6"/><line x1="1165.30" y1="345.60" x2="1165.30" y2="360.48" stroke="#000" stroke-width="1.6"/><line x1="1225.60" y1="345.60" x2="1225.60" y2="360.48" stroke="#000" stroke-width="1.6"/><line x1="1287.80" y1="345.60" x2="1287.80" y2="360.48" stroke="#000" stroke-width="1.6"/><line x1="1349.00" y1="345.60" x2="1349.00" y2="360.48" stroke="#000" stroke-width="1.6"/><line x1="1384.60" y1="345.60" x2="1384.60" y2="360.48" stroke="#000" stroke-width="1.6"/><line x1="1453.20" y1="345.60" x2="1453.20" y2="360.48" stroke="#000" stroke-width="1.6"/><line x1="970" y1="388.80" x2="1452.9" y2="388.80" stroke="#6a6a6a" stroke-width="0.75"/><line x1="970" y1="392.52" x2="1452.9" y2="392.52" stroke="#6a6a6a" stroke-width="0.75"/><line x1="970" y1="396.24" x2="1452.9" y2="396.24" stroke="#6a6a6a" stroke-width="0.75"/><line x1="970" y1="399.96" x2="1452.9" y2="399.96" stroke="#6a6a6a" stroke-width="0.75"/><line x1="970" y1="403.68" x2="1452.9" y2="403.68" stroke="#6a6a6a" stroke-width="0.75"/><g transform="translate(973.30,382.95) scale(0.457)"><path d="M12.5 38.5 C9 39 7.5 35 10.5 32.5 C14 30 19 32.5 19 37.5 C19 43 14 45.5 9.5 45 C3.5 44.5 0.8 39 2 34 C3.5 27 9.5 24 12.5 19 C15.5 14 16 8 14.5 3.5 C13.5 0.5 11 0.5 9.5 3 C8 6 8.5 12 10 20 L13.5 50 C14 55 11.5 58 8 57.5 C5 57 4 54 6 52.5" fill="none" stroke="#000" stroke-width="2.3" stroke-linecap="round"/><circle cx="6.8" cy="54" r="3" fill="#000"/></g><line x1="986.49" y1="384.75" x2="986.49" y2="393.30" stroke="#000" stroke-width="0.50"/><line x1="988.11" y1="384.07" x2="988.11" y2="392.62" stroke="#000" stroke-width="0.50"/><line x1="985.50" y1="387.94" x2="989.10" y2="386.78" stroke="#000" stroke-width="1.30"/><line x1="985.50" y1="390.82" x2="989.10" y2="389.66" stroke="#000" stroke-width="1.30"/><line x1="990.59" y1="390.33" x2="990.59" y2="398.88" stroke="#000" stroke-width="0.50"/><line x1="992.21" y1="389.65" x2="992.21" y2="398.20" stroke="#000" stroke-width="0.50"/><line x1="989.60" y1="393.52" x2="993.20" y2="392.36" stroke="#000" stroke-width="1.30"/><line x1="989.60" y1="396.40" x2="993.20" y2="395.24" stroke="#000" stroke-width="1.30"/><line x1="994.39" y1="382.89" x2="994.39" y2="391.44" stroke="#000" stroke-width="0.50"/><line x1="996.01" y1="382.21" x2="996.01" y2="390.76" stroke="#000" stroke-width="0.50"/><line x1="993.40" y1="386.08" x2="997.00" y2="384.92" stroke="#000" stroke-width="1.30"/><line x1="993.40" y1="388.96" x2="997.00" y2="387.80" stroke="#000" stroke-width="1.30"/><line x1="1062.70" y1="388.80" x2="1062.70" y2="403.68" stroke="#000" stroke-width="1.6"/><line x1="1122.00" y1="388.80" x2="1122.00" y2="403.68" stroke="#000" stroke-width="1.6"/><line x1="1165.30" y1="388.80" x2="1165.30" y2="403.68" stroke="#000" stroke-width="1.6"/><line x1="1225.60" y1="388.80" x2="1225.60" y2="403.68" stroke="#000" stroke-width="1.6"/><line x1="1287.80" y1="388.80" x2="1287.80" y2="403.68" stroke="#000" stroke-width="1.6"/><line x1="1349.00" y1="388.80" x2="1349.00" y2="403.68" stroke="#000" stroke-width="1.6"/><line x1="1384.60" y1="388.80" x2="1384.60" y2="403.68" stroke="#000" stroke-width="1.6"/><line x1="1453.20" y1="388.80" x2="1453.20" y2="403.68" stroke="#000" stroke-width="1.6"/><line x1="970" y1="303.7" x2="970" y2="400" stroke="#000" stroke-width="0.9"/><text x="962.5" y="299.5" font-family="Liberation Serif" font-size="6" fill="#000">10</text><ellipse cx="1008.20" cy="312.40" rx="2.40" ry="1.75" transform="rotate(-22 1008.20 312.40)" fill="#000"/><line x1="1010.40" y1="312.40" x2="1010.40" y2="299.90" stroke="#000" stroke-width="0.8"/><ellipse cx="1023.20" cy="313.30" rx="2.40" ry="1.75" transform="rotate(-22 1023.20 313.30)" fill="#000"/><line x1="1021.00" y1="313.30" x2="1021.00" y2="325.80" stroke="#000" stroke-width="0.8"/><path d="M1021.00 325.80 C1022.00 322.80 1025.00 321.80 1024.00 317.80" fill="none" stroke="#000" stroke-width="0.9"/><ellipse cx="1036.50" cy="310.80" rx="2.40" ry="1.75" transform="rotate(-22 1036.50 310.80)" fill="#000"/><line x1="1034.30" y1="310.80" x2="1034.30" y2="323.30" stroke="#000" stroke-width="0.8"/><ellipse cx="1053.00" cy="315.00" rx="2.40" ry="1.75" transform="rotate(-22 1053.00 315.00)" fill="#000"/><line x1="1055.20" y1="315.00" x2="1055.20" y2="302.50" stroke="#000" stroke-width="0.8"/><path d="M1055.20 302.50 C1056.20 305.50 1059.20 306.50 1058.20 310.50" fill="none" stroke="#000" stroke-width="0.9"/><ellipse cx="1068.90" cy="312.40" rx="2.40" ry="1.75" transform="rotate(-22 1068.90 312.40)" fill="#000"/><line x1="1071.10" y1="312.40" x2="1071.10" y2="299.90" stroke="#000" stroke-width="0.8"/><ellipse cx="1085.50" cy="315.00" rx="2.40" ry="1.75" transform="rotate(-22 1085.50 315.00)" fill="#000"/><line x1="1087.70" y1="315.00" x2="1087.70" y2="302.50" stroke="#000" stroke-width="0.8"/><path d="M1087.70 302.50 C1088.70 305.50 1091.70 306.50 1090.70 310.50" fill="none" stroke="#000" stroke-width="0.9"/><ellipse cx="1096.30" cy="312.40" rx="2.40" ry="1.75" transform="rotate(-22 1096.30 312.40)" fill="#000"/><line x1="1098.50" y1="312.40" x2="1098.50" y2="299.90" stroke="#000" stroke-width="0.8"/><ellipse cx="1111.30" cy="315.00" rx="2.40" ry="1.75" transform="rotate(-22 1111.30 315.00)" fill="#000"/><line x1="1109.10" y1="315.00" x2="1109.10" y2="327.50" stroke="#000" stroke-width="0.8"/><path d="M1109.10 327.50 C1110.10 324.50 1113.10 323.50 1112.10 319.50" fill="none" stroke="#000" stroke-width="0.9"/><ellipse cx="1129.50" cy="309.60" rx="2.10" ry="1.40" transform="rotate(-25 1129.50 309.60)" fill="none" stroke="#000" stroke-width="0.9"/><line x1="1127.30" y1="309.60" x2="1127.30" y2="322.10" stroke="#000" stroke-width="0.8"/><circle cx="1133.80" cy="308.70" r="0.75" fill="#000"/><ellipse cx="1171.00" cy="312.40" rx="2.40" ry="1.75" transform="rotate(-22 1171.00 312.40)" fill="#000"/><line x1="1173.20" y1="312.40" x2="1173.20" y2="299.90" stroke="#000" stroke-width="0.8"/><ellipse cx="1187.70" cy="314.60" rx="2.40" ry="1.75" transform="rotate(-22 1187.70 314.60)" fill="#000"/><line x1="1185.50" y1="314.60" x2="1185.50" y2="327.10" stroke="#000" stroke-width="0.8"/><path d="M1185.50 327.10 C1186.50 324.10 1189.50 323.10 1188.50 319.10" fill="none" stroke="#000" stroke-width="0.9"/><ellipse cx="1199.40" cy="309.60" rx="2.40" ry="1.75" transform="rotate(-22 1199.40 309.60)" fill="#000"/><line x1="1197.20" y1="309.60" x2="1197.20" y2="322.10" stroke="#000" stroke-width="0.8"/><ellipse cx="1214.70" cy="316.00" rx="2.40" ry="1.75" transform="rotate(-22 1214.70 316.00)" fill="#000"/><line x1="1212.50" y1="316.00" x2="1212.50" y2="328.50" stroke="#000" stroke-width="0.8"/><path d="M1212.50 328.50 C1213.50 325.50 1216.50 324.50 1215.50 320.50" fill="none" stroke="#000" stroke-width="0.9"/><ellipse cx="1232.00" cy="310.70" rx="2.40" ry="1.75" transform="rotate(-22 1232.00 310.70)" fill="#000"/><line x1="1229.80" y1="310.70" x2="1229.80" y2="323.20" stroke="#000" stroke-width="0.8"/><ellipse cx="1247.50" cy="312.50" rx="2.40" ry="1.75" transform="rotate(-22 1247.50 312.50)" fill="#000"/><line x1="1249.70" y1="312.50" x2="1249.70" y2="300.00" stroke="#000" stroke-width="0.8"/><ellipse cx="1255.00" cy="310.40" rx="2.40" ry="1.75" transform="rotate(-22 1255.00 310.40)" fill="#000"/><line x1="1257.20" y1="310.40" x2="1257.20" y2="297.90" stroke="#000" stroke-width="0.8"/><ellipse cx="1261.40" cy="314.20" rx="2.40" ry="1.75" transform="rotate(-22 1261.40 314.20)" fill="#000"/><line x1="1259.20" y1="314.20" x2="1259.20" y2="326.70" stroke="#000" stroke-width="0.8"/><ellipse cx="1277.80" cy="315.00" rx="2.40" ry="1.75" transform="rotate(-22 1277.80 315.00)" fill="#000"/><line x1="1280.00" y1="315.00" x2="1280.00" y2="302.50" stroke="#000" stroke-width="0.8"/><path d="M1280.00 302.50 C1281.00 305.50 1284.00 306.50 1283.00 310.50" fill="none" stroke="#000" stroke-width="0.9"/><ellipse cx="1294.20" cy="311.60" rx="2.40" ry="1.75" transform="rotate(-22 1294.20 311.60)" fill="#000"/><line x1="1296.40" y1="311.60" x2="1296.40" y2="299.10" stroke="#000" stroke-width="0.8"/><circle cx="1298.50" cy="310.70" r="0.75" fill="#000"/><ellipse cx="1314.00" cy="315.00" rx="2.40" ry="1.75" transform="rotate(-22 1314.00 315.00)" fill="#000"/><line x1="1316.20" y1="315.00" x2="1316.20" y2="302.50" stroke="#000" stroke-width="0.8"/><circle cx="1318.30" cy="314.10" r="0.75" fill="#000"/><ellipse cx="1327.00" cy="316.00" rx="2.40" ry="1.75" transform="rotate(-22 1327.00 316.00)" fill="#000"/><line x1="1329.20" y1="316.00" x2="1329.20" y2="303.50" stroke="#000" stroke-width="0.8"/><ellipse cx="1334.80" cy="316.00" rx="2.40" ry="1.75" transform="rotate(-22 1334.80 316.00)" fill="#000"/><line x1="1337.00" y1="316.00" x2="1337.00" y2="303.50" stroke="#000" stroke-width="0.8"/><ellipse cx="1341.70" cy="315.50" rx="2.40" ry="1.75" transform="rotate(-22 1341.70 315.50)" fill="#000"/><line x1="1343.90" y1="315.50" x2="1343.90" y2="303.00" stroke="#000" stroke-width="0.8"/><ellipse cx="1361.60" cy="312.50" rx="2.10" ry="1.40" transform="rotate(-25 1361.60 312.50)" fill="none" stroke="#000" stroke-width="0.9"/><line x1="1363.80" y1="312.50" x2="1363.80" y2="300.00" stroke="#000" stroke-width="0.8"/><circle cx="1365.90" cy="311.60" r="0.75" fill="#000"/><ellipse cx="1391.00" cy="315.00" rx="2.40" ry="1.75" transform="rotate(-22 1391.00 315.00)" fill="#000"/><line x1="1393.20" y1="315.00" x2="1393.20" y2="302.50" stroke="#000" stroke-width="0.8"/><ellipse cx="1406.60" cy="313.30" rx="2.40" ry="1.75" transform="rotate(-22 1406.60 313.30)" fill="#000"/><line x1="1408.80" y1="313.30" x2="1408.80" y2="300.80" stroke="#000" stroke-width="0.8"/><path d="M1408.80 300.80 C1409.80 303.80 1412.80 304.80 1411.80 308.80" fill="none" stroke="#000" stroke-width="0.9"/><ellipse cx="1422.00" cy="314.20" rx="2.40" ry="1.75" transform="rotate(-22 1422.00 314.20)" fill="#000"/><line x1="1424.20" y1="314.20" x2="1424.20" y2="301.70" stroke="#000" stroke-width="0.8"/><ellipse cx="1443.70" cy="315.00" rx="2.40" ry="1.75" transform="rotate(-22 1443.70 315.00)" fill="#000"/><line x1="1445.90" y1="315.00" x2="1445.90" y2="302.50" stroke="#000" stroke-width="0.8"/><path d="M1445.90 302.50 C1446.90 305.50 1449.90 306.50 1448.90 310.50" fill="none" stroke="#000" stroke-width="0.9"/><ellipse cx="1008.20" cy="359.00" rx="2.40" ry="1.75" transform="rotate(-22 1008.20 359.00)" fill="#000"/><line x1="1010.40" y1="359.00" x2="1010.40" y2="346.50" stroke="#000" stroke-width="0.8"/><ellipse cx="1023.20" cy="359.00" rx="2.40" ry="1.75" transform="rotate(-22 1023.20 359.00)" fill="#000"/><line x1="1025.40" y1="359.00" x2="1025.40" y2="346.50" stroke="#000" stroke-width="0.8"/><path d="M1025.40 346.50 C1026.40 349.50 1029.40 350.50 1028.40 354.50" fill="none" stroke="#000" stroke-width="0.9"/><ellipse cx="1037.30" cy="359.80" rx="2.40" ry="1.75" transform="rotate(-22 1037.30 359.80)" fill="#000"/><line x1="1039.50" y1="359.80" x2="1039.50" y2="347.30" stroke="#000" stroke-width="0.8"/><ellipse cx="1053.00" cy="358.20" rx="2.40" ry="1.75" transform="rotate(-22 1053.00 358.20)" fill="#000"/><line x1="1055.20" y1="358.20" x2="1055.20" y2="345.70" stroke="#000" stroke-width="0.8"/><path d="M1055.20 345.70 C1056.20 348.70 1059.20 349.70 1058.20 353.70" fill="none" stroke="#000" stroke-width="0.9"/><ellipse cx="1068.90" cy="361.50" rx="2.40" ry="1.75" transform="rotate(-22 1068.90 361.50)" fill="#000"/><line x1="1071.10" y1="361.50" x2="1071.10" y2="349.00" stroke="#000" stroke-width="0.8"/><ellipse cx="1085.50" cy="358.20" rx="2.40" ry="1.75" transform="rotate(-22 1085.50 358.20)" fill="#000"/><line x1="1087.70" y1="358.20" x2="1087.70" y2="345.70" stroke="#000" stroke-width="0.8"/><path d="M1087.70 345.70 C1088.70 348.70 1091.70 349.70 1090.70 353.70" fill="none" stroke="#000" stroke-width="0.9"/><ellipse cx="1096.30" cy="361.50" rx="2.40" ry="1.75" transform="rotate(-22 1096.30 361.50)" fill="#000"/><line x1="1098.50" y1="361.50" x2="1098.50" y2="349.00" stroke="#000" stroke-width="0.8"/><ellipse cx="1111.30" cy="361.50" rx="2.40" ry="1.75" transform="rotate(-22 1111.30 361.50)" fill="#000"/><line x1="1113.50" y1="361.50" x2="1113.50" y2="349.00" stroke="#000" stroke-width="0.8"/><path d="M1113.50 349.00 C1114.50 352.00 1117.50 353.00 1116.50 357.00" fill="none" stroke="#000" stroke-width="0.9"/><ellipse cx="1128.70" cy="364.00" rx="2.40" ry="1.75" transform="rotate(-22 1128.70 364.00)" fill="#000"/><line x1="1130.90" y1="364.00" x2="1130.90" y2="351.50" stroke="#000" stroke-width="0.8"/><circle cx="1133.00" cy="363.10" r="0.75" fill="#000"/><ellipse cx="1147.80" cy="355.70" rx="2.40" ry="1.75" transform="rotate(-22 1147.80 355.70)" fill="#000"/><line x1="1150.00" y1="355.70" x2="1150.00" y2="343.20" stroke="#000" stroke-width="0.8"/><circle cx="1152.10" cy="354.80" r="0.75" fill="#000"/><ellipse cx="1171.00" cy="358.20" rx="2.40" ry="1.75" transform="rotate(-22 1171.00 358.20)" fill="#000"/><line x1="1173.20" y1="358.20" x2="1173.20" y2="345.70" stroke="#000" stroke-width="0.8"/><ellipse cx="1187.70" cy="358.20" rx="2.40" ry="1.75" transform="rotate(-22 1187.70 358.20)" fill="#000"/><line x1="1189.90" y1="358.20" x2="1189.90" y2="345.70" stroke="#000" stroke-width="0.8"/><path d="M1189.90 345.70 C1190.90 348.70 1193.90 349.70 1192.90 353.70" fill="none" stroke="#000" stroke-width="0.9"/><ellipse cx="1199.40" cy="355.70" rx="2.40" ry="1.75" transform="rotate(-22 1199.40 355.70)" fill="#000"/><line x1="1201.60" y1="355.70" x2="1201.60" y2="343.20" stroke="#000" stroke-width="0.8"/><ellipse cx="1215.60" cy="355.70" rx="2.40" ry="1.75" transform="rotate(-22 1215.60 355.70)" fill="#000"/><line x1="1217.80" y1="355.70" x2="1217.80" y2="343.20" stroke="#000" stroke-width="0.8"/><path d="M1217.80 343.20 C1218.80 346.20 1221.80 347.20 1220.80 351.20" fill="none" stroke="#000" stroke-width="0.9"/><ellipse cx="1232.00" cy="358.30" rx="2.40" ry="1.75" transform="rotate(-22 1232.00 358.30)" fill="#000"/><line x1="1234.20" y1="358.30" x2="1234.20" y2="345.80" stroke="#000" stroke-width="0.8"/><circle cx="1236.30" cy="357.40" r="0.75" fill="#000"/><ellipse cx="1263.00" cy="354.80" rx="2.40" ry="1.75" transform="rotate(-22 1263.00 354.80)" fill="#000"/><line x1="1265.20" y1="354.80" x2="1265.20" y2="342.30" stroke="#000" stroke-width="0.8"/><ellipse cx="1278.70" cy="360.00" rx="2.40" ry="1.75" transform="rotate(-22 1278.70 360.00)" fill="#000"/><line x1="1280.90" y1="360.00" x2="1280.90" y2="347.50" stroke="#000" stroke-width="0.8"/><path d="M1280.90 347.50 C1281.90 350.50 1284.90 351.50 1283.90 355.50" fill="none" stroke="#000" stroke-width="0.9"/><ellipse cx="1295.00" cy="360.00" rx="2.40" ry="1.75" transform="rotate(-22 1295.00 360.00)" fill="#000"/><line x1="1297.20" y1="360.00" x2="1297.20" y2="347.50" stroke="#000" stroke-width="0.8"/><circle cx="1299.30" cy="359.10" r="0.75" fill="#000"/><ellipse cx="1314.00" cy="361.70" rx="2.40" ry="1.75" transform="rotate(-22 1314.00 361.70)" fill="#000"/><line x1="1316.20" y1="361.70" x2="1316.20" y2="349.20" stroke="#000" stroke-width="0.8"/><circle cx="1318.30" cy="360.80" r="0.75" fill="#000"/><ellipse cx="1361.60" cy="360.00" rx="2.10" ry="1.40" transform="rotate(-25 1361.60 360.00)" fill="none" stroke="#000" stroke-width="0.9"/><line x1="1363.80" y1="360.00" x2="1363.80" y2="347.50" stroke="#000" stroke-width="0.8"/><circle cx="1365.90" cy="359.10" r="0.75" fill="#000"/><ellipse cx="1391.00" cy="363.50" rx="2.40" ry="1.75" transform="rotate(-22 1391.00 363.50)" fill="#000"/><line x1="1393.20" y1="363.50" x2="1393.20" y2="351.00" stroke="#000" stroke-width="0.8"/><ellipse cx="1406.60" cy="364.30" rx="2.40" ry="1.75" transform="rotate(-22 1406.60 364.30)" fill="#000"/><line x1="1408.80" y1="364.30" x2="1408.80" y2="351.80" stroke="#000" stroke-width="0.8"/><path d="M1408.80 351.80 C1409.80 354.80 1412.80 355.80 1411.80 359.80" fill="none" stroke="#000" stroke-width="0.9"/><ellipse cx="1421.30" cy="363.50" rx="2.40" ry="1.75" transform="rotate(-22 1421.30 363.50)" fill="#000"/><line x1="1423.50" y1="363.50" x2="1423.50" y2="351.00" stroke="#000" stroke-width="0.8"/><ellipse cx="1443.70" cy="358.30" rx="2.40" ry="1.75" transform="rotate(-22 1443.70 358.30)" fill="#000"/><line x1="1445.90" y1="358.30" x2="1445.90" y2="345.80" stroke="#000" stroke-width="0.8"/><path d="M1445.90 345.80 C1446.90 348.80 1449.90 349.80 1448.90 353.80" fill="none" stroke="#000" stroke-width="0.9"/><line x1="1249.7" y1="299.5" x2="1257.2" y2="299" stroke="#000" stroke-width="1.1"/><line x1="1249.7" y1="301.5" x2="1257.2" y2="301" stroke="#000" stroke-width="1.1"/><line x1="1316.2" y1="302.5" x2="1344" y2="302.5" stroke="#000" stroke-width="1.1"/><line x1="1329" y1="304.7" x2="1344" y2="304.7" stroke="#000" stroke-width="1.1"/><line x1="1307.49" y1="358.45" x2="1307.49" y2="367.00" stroke="#000" stroke-width="0.50"/><line x1="1309.11" y1="357.77" x2="1309.11" y2="366.32" stroke="#000" stroke-width="0.50"/><line x1="1306.50" y1="361.64" x2="1310.10" y2="360.48" stroke="#000" stroke-width="1.30"/><line x1="1306.50" y1="364.52" x2="1310.10" y2="363.36" stroke="#000" stroke-width="1.30"/><rect x="1026.7" y="392.5" width="5" height="2" fill="#000"/><rect x="1089.7" y="392.5" width="5" height="2" fill="#000"/><rect x="1416.0" y="392.5" width="5" height="2" fill="#000"/><path d="M1127 391 L1130 394 L1127 397 L1130 399" fill="none" stroke="#000" stroke-width="1"/><line x1="1148" y1="396" x2="1148" y2="400" stroke="#000" stroke-width="0.8"/><line x1="1178" y1="396" x2="1178" y2="400" stroke="#000" stroke-width="0.8"/><line x1="1198" y1="396" x2="1198" y2="400" stroke="#000" stroke-width="0.8"/><line x1="1214" y1="396" x2="1214" y2="400" stroke="#000" stroke-width="0.8"/><line x1="1238" y1="396" x2="1238" y2="400" stroke="#000" stroke-width="0.8"/><line x1="1262" y1="396" x2="1262" y2="400" stroke="#000" stroke-width="0.8"/><line x1="1278" y1="396" x2="1278" y2="400" stroke="#000" stroke-width="0.8"/><line x1="1318" y1="396" x2="1318" y2="400" stroke="#000" stroke-width="0.8"/><line x1="1338" y1="396" x2="1338" y2="400" stroke="#000" stroke-width="0.8"/><line x1="1410" y1="396" x2="1410" y2="400" stroke="#000" stroke-width="0.8"/><text x="1000.7" y="334.8" font-family="Liberation Serif" font-size="9.4" fill="#222" textLength="59.0" lengthAdjust="spacingAndGlyphs">con-seq-un-tur</text><text x="1063.9" y="334.8" font-family="Liberation Serif" font-size="9.4" fill="#222" textLength="73.1" lengthAdjust="spacingAndGlyphs">me - li - o - re-ant,</text><text x="1230.3" y="334.8" font-family="Liberation Serif" font-size="9.4" fill="#222" textLength="6.0" lengthAdjust="spacingAndGlyphs">vi</text><text x="1246.5" y="334.8" font-family="Liberation Serif" font-size="9.4" fill="#222" textLength="3.0" lengthAdjust="spacingAndGlyphs">-</text><text x="1258.0" y="334.8" font-family="Liberation Serif" font-size="9.4" fill="#222" textLength="24.0" lengthAdjust="spacingAndGlyphs">de - us</text><text x="1286.4" y="334.8" font-family="Liberation Serif" font-size="9.4" fill="#222" textLength="34.6" lengthAdjust="spacingAndGlyphs">man - da</text><text x="1335.5" y="334.8" font-family="Liberation Serif" font-size="9.4" fill="#222" textLength="3.0" lengthAdjust="spacingAndGlyphs">-</text><text x="1351.3" y="334.8" font-family="Liberation Serif" font-size="9.4" fill="#222" textLength="19.0" lengthAdjust="spacingAndGlyphs">mus.</text><text x="1388.4" y="334.8" font-family="Liberation Serif" font-size="9.4" fill="#222" textLength="64.8" lengthAdjust="spacingAndGlyphs">E - lo-quen-tiam</text><text x="1000.7" y="377.2" font-family="Liberation Serif" font-size="9.4" fill="#222" textLength="59.0" lengthAdjust="spacingAndGlyphs">con-seq-un-tur</text><text x="1063.9" y="377.2" font-family="Liberation Serif" font-size="9.4" fill="#222" textLength="73.1" lengthAdjust="spacingAndGlyphs">me - li - o - re-ant,</text><text x="1230.3" y="377.2" font-family="Liberation Serif" font-size="9.4" fill="#222" textLength="6.0" lengthAdjust="spacingAndGlyphs">vi</text><text x="1246.5" y="377.2" font-family="Liberation Serif" font-size="9.4" fill="#222" textLength="3.0" lengthAdjust="spacingAndGlyphs">-</text><text x="1258.0" y="377.2" font-family="Liberation Serif" font-size="9.4" fill="#222" textLength="24.0" lengthAdjust="spacingAndGlyphs">de - us</text><text x="1286.4" y="377.2" font-family="Liberation Serif" font-size="9.4" fill="#222" textLength="34.6" lengthAdjust="spacingAndGlyphs">man - da</text><text x="1335.5" y="377.2" font-family="Liberation Serif" font-size="9.4" fill="#222" textLength="3.0" lengthAdjust="spacingAndGlyphs">-</text><text x="1351.3" y="377.2" font-family="Liberation Serif" font-size="9.4" fill="#222" textLength="19.0" lengthAdjust="spacingAndGlyphs">mus.</text><text x="1388.4" y="377.2" font-family="Liberation Serif" font-size="9.4" fill="#222" textLength="64.8" lengthAdjust="spacingAndGlyphs">E - lo-quen-tiam</text><text x="1167.8" y="334.8" font-family="Liberation Serif" font-size="9.4" fill="#222" textLength="53.8" lengthAdjust="spacingAndGlyphs">vi - de e - us,</text><text x="1143.7" y="377.2" font-family="Liberation Serif" font-size="9.4" fill="#222" textLength="7.5" lengthAdjust="spacingAndGlyphs">vi</text><text x="1157.0" y="377.2" font-family="Liberation Serif" font-size="9.4" fill="#222" textLength="3.0" lengthAdjust="spacingAndGlyphs">-</text><text x="1167.8" y="377.2" font-family="Liberation Serif" font-size="9.4" fill="#222" textLength="53.8" lengthAdjust="spacingAndGlyphs">de --re e - us,</text></g></svg>
<div class="a" style="left:938px;top:433px;width:548px;height:382px;background:#bbbdb6;"></div>
<div class="a" style="left:1487px;top:432px;width:12px;height:384px;background:#7b7d78;border:1px solid #62645f;border-radius:4px;box-sizing:border-box;"></div>
<div class="a" style="left:1487px;top:433px;width:12px;height:11px;background:#93958f;border:1px solid #6a6c67;border-radius:3px;box-sizing:border-box;"></div>
<svg class="a" style="left:1487px;top:433px" width="12" height="11"><path d="M3.5 7 L6 4.5 L8.5 7" fill="none" stroke="#e8e8e6" stroke-width="1.3"/></svg>
<div class="a" style="left:1487px;top:675px;width:12px;height:45px;background:#969893;border:1px solid #6a6c67;border-radius:2px;box-sizing:border-box;"></div>
<div class="a" style="left:1489px;top:695px;width:8px;height:1px;background:#6a6c67;"></div>
<div class="a" style="left:1489px;top:697px;width:8px;height:1px;background:#6a6c67;"></div>
<div class="a" style="left:1489px;top:699px;width:8px;height:1px;background:#6a6c67;"></div>
<div class="a" style="left:1487px;top:805px;width:12px;height:12px;background:#93958f;border:1px solid #6a6c67;border-radius:3px;box-sizing:border-box;"></div>
<svg class="a" style="left:1487px;top:805px" width="12" height="12"><path d="M3.5 4.5 L6 7 L8.5 4.5" fill="none" stroke="#e8e8e6" stroke-width="1.3"/></svg>
<div class="a" style="left:937px;top:818px;width:548px;height:12px;background:#7b7d78;border:1px solid #62645f;border-radius:4px;box-sizing:border-box;"></div>
<div class="a" style="left:937px;top:818px;width:110px;height:11px;background:#969893;border:1px solid #6a6c67;border-radius:3px;box-sizing:border-box;"></div>
<div class="a" style="left:948px;top:818px;width:1px;height:11px;background:#6a6c67;"></div>
<svg class="a" style="left:937px;top:818px" width="11" height="11"><path d="M6.5 3 L4 5.5 L6.5 8" fill="none" stroke="#b0b2ac" stroke-width="1.2"/></svg>
<svg class="a" style="left:992px;top:818px" width="10" height="11"><path d="M2 3V8M4.5 3V8M7 3V8" stroke="#6a6c67" stroke-width="1"/></svg>
<div class="a" style="left:1473px;top:818px;width:12px;height:11px;background:#93958f;border:1px solid #6a6c67;border-radius:3px;box-sizing:border-box;"></div>
<svg class="a" style="left:1473px;top:818px" width="12" height="11"><path d="M5 3 L7.5 5.5 L5 8" fill="none" stroke="#e0e0dc" stroke-width="1.3"/></svg>
<div class="t" style="left:937.6px;top:435.22px;font-size:10.43px;font-family:'Liberation Mono',monospace;color:#000;">%25</div>
<div class="a" style="left:988px;top:447.4px;width:6px;height:66.2px;background:#d6d7d1;"></div>
<div class="a" style="left:1012.8px;top:447.4px;width:6px;height:13.24px;background:#d6d7d1;"></div>
<div class="a" style="left:1037.8px;top:447.4px;width:6px;height:13.24px;background:#d6d7d1;"></div>
<div class="a" style="left:1062.9px;top:447.4px;width:6px;height:13.24px;background:#d6d7d1;"></div>
<div class="t" style="left:994px;top:448.57px;font-size:10.43px;font-family:'Liberation Mono',monospace;color:#000;">e'4 d'8 e'4 fis'8%|</div>
<div class="a" style="left:1019.0px;top:460.64px;width:6px;height:13.24px;background:#d6d7d1;"></div>
<div class="t" style="left:994px;top:461.92px;font-size:10.43px;font-family:'Liberation Mono',monospace;color:#000;">e'4. fis'%|</div>
<div class="a" style="left:1006.5px;top:473.88px;width:6px;height:13.24px;background:#d6d7d1;"></div>
<div class="t" style="left:994px;top:475.27px;font-size:10.43px;font-family:'Liberation Mono',monospace;color:#000;">d' e'%|</div>
<div class="t" style="left:994px;top:488.62px;font-size:10.43px;font-family:'Liberation Mono',monospace;color:#000;">cis'2.%|</div>
<div class="a" style="left:1019.0px;top:500.35999999999996px;width:6px;height:13.24px;background:#d6d7d1;"></div>
<div class="a" style="left:1056.6px;top:500.35999999999996px;width:6px;height:13.24px;background:#d6d7d1;"></div>
<div class="t" style="left:994px;top:501.97px;font-size:10.43px;font-family:'Liberation Mono',monospace;color:#000;">d'4. cis'4 e'8%|</div>
<div class="t" style="left:937.6px;top:515.32px;font-size:10.43px;font-family:'Liberation Mono',monospace;color:#000;">%30</div>
<div class="a" style="left:988px;top:527.3px;width:6px;height:39.7px;background:#d6d7d1;"></div>
<div class="a" style="left:1031.6px;top:527.3px;width:6px;height:13.24px;background:#d6d7d1;"></div>
<div class="t" style="left:994px;top:528.67px;font-size:10.43px;font-family:'Liberation Mono',monospace;color:#000;">fis'4. e'%|</div>
<div class="a" style="left:1019.0px;top:540.54px;width:6px;height:13.24px;background:#d6d7d1;"></div>
<div class="t" style="left:994px;top:542.02px;font-size:10.43px;font-family:'Liberation Mono',monospace;color:#000;">fis' fis'%|</div>
<div class="t" style="left:994px;top:555.37px;font-size:10.43px;font-family:'Liberation Mono',monospace;color:#000;">e'2.^<b>\markup \italic \bold {D. C. al fine}</b> \bar "|."</div>
<div class="t" style="left:937.6px;top:568.82px;font-size:10.43px;font-family:'Liberation Mono',monospace;color:#000;">}</div>
<div class="btn" style="left:938px;top:608px;width:165px;height:21px;background:linear-gradient(#8e908b,#80827d);"></div>
<div class="t" style="left:943px;top:612.72px;font-size:10.43px;font-family:'Liberation Mono',monospace;">Lyrics for MvmntI Voice 3</div>
<div class="t" style="left:1104px;top:620.32px;font-size:10.43px;font-family:'Liberation Mono',monospace;color:#000;">MvmntIVoiceIIILyricsVerseI = \lyricmode {</div>
<div class="t" style="left:937.6px;top:633.72px;font-size:10.43px;font-family:'Liberation Mono',monospace;color:#000;width:548px;overflow:hidden;">Sig -- ni -- fe. ver -- te -- rem. E -- nim re -- pre -- hen -- de -- runt. Vi -- de --re e -- us, vi -- de -- us man -- da -- mus.</div>
<div class="t" style="left:937.6px;top:646.72px;font-size:10.43px;font-family:'Liberation Mono',monospace;color:#000;">}</div>
<div class="btn" style="left:938px;top:687px;width:121px;height:21px;background:linear-gradient(#8e908b,#80827d);"></div>
<div class="t" style="left:943px;top:691.72px;font-size:10.43px;font-family:'Liberation Mono',monospace;">MvmntI Definitions</div>
<div class="t" style="left:987.5px;top:710.22px;font-size:10.43px;font-family:'Liberation Mono',monospace;color:#000;">MvmntIVoiceITimeSig = \time 6/8</div>
<div class="t" style="left:937.6px;top:723.64px;font-size:10.43px;font-family:'Liberation Mono',monospace;color:#000;">MvmntIVoiceIKeySig = \key a \major</div>
<div class="t" style="left:943.86px;top:737.06px;font-size:10.43px;font-family:'Liberation Mono',monospace;color:#000;">MvmntIVoiceIClef = \clef treble</div>
<div class="t" style="left:937.6px;top:750.48px;font-size:10.43px;font-family:'Liberation Mono',monospace;color:#000;">MvmntIVoiceIProlog = { \MvmntIVoiceITimeSig \MvmntIVoiceIKeySig \MvmntIVoiceIClef}</div>
<div class="t" style="left:937.6px;top:763.90px;font-size:10.43px;font-family:'Liberation Mono',monospace;color:#000;">MvmntIVoiceIMusic =  {\MvmntIVoiceIProlog \MvmntIVoiceI}</div>
<div class="t" style="left:937.6px;top:777.32px;font-size:10.43px;font-family:'Liberation Mono',monospace;color:#000;">MvmntIVoiceIContext = \context Voice = VoiceIMvmntI  {\MvmntIVoiceIMusic}</div>
<div class="t" style="left:987.5px;top:803.02px;font-size:10.43px;font-family:'Liberation Mono',monospace;color:#000;">MvmntIVoiceIITimeSig = \time 6/8</div>
</body></html>
